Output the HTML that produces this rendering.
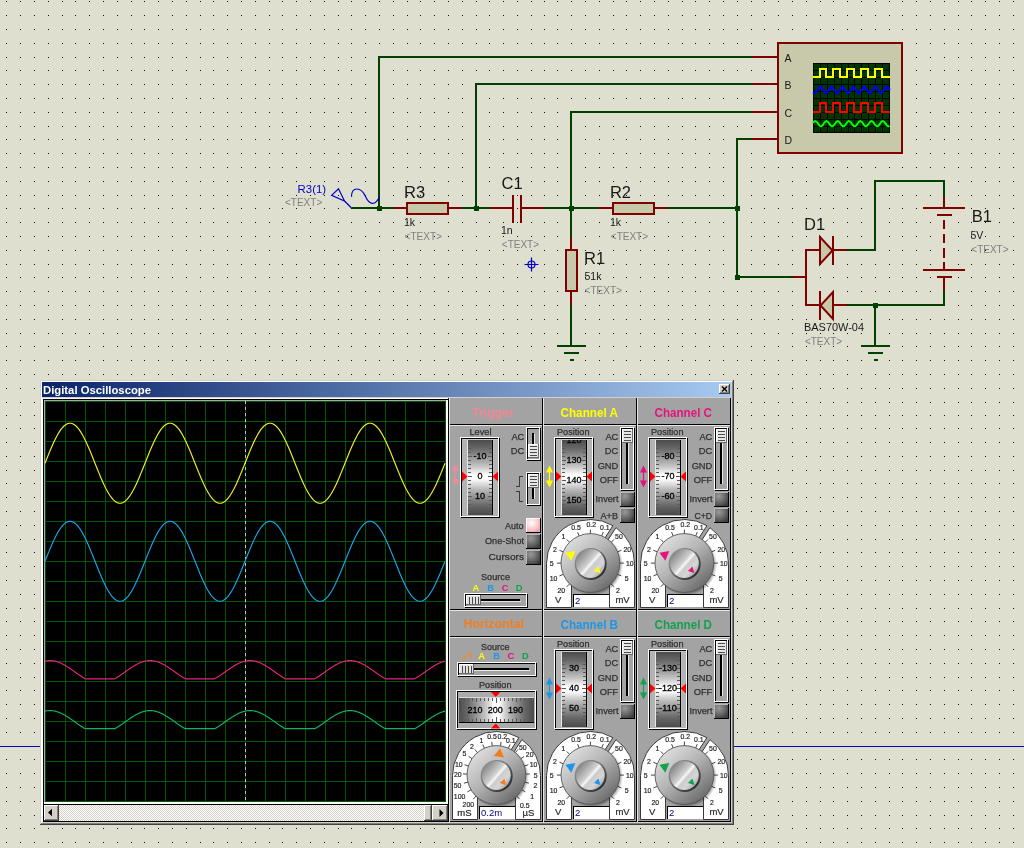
<!DOCTYPE html>
<html><head><meta charset="utf-8"><title>Digital Oscilloscope</title>
<style>
html,body{margin:0;padding:0;background:#DEDFCE;overflow:hidden}
svg{display:block;will-change:transform;transform:translateZ(0)}
text{font-family:"Liberation Sans",sans-serif}
.b{font-weight:bold}
</style></head><body>
<svg width="1024" height="848" viewBox="0 0 1024 848">

<defs>
<path id="dr" d="M6 0h1M20 0h1M34 0h1M48 0h1M62 0h1M75 0h1M89 0h1M103 0h1M117 0h1M131 0h1M144 0h1M158 0h1M172 0h1M186 0h1M200 0h1M213 0h1M227 0h1M241 0h1M255 0h1M269 0h1M282 0h1M296 0h1M310 0h1M324 0h1M338 0h1M351 0h1M365 0h1M379 0h1M393 0h1M407 0h1M420 0h1M434 0h1M448 0h1M462 0h1M476 0h1M489 0h1M503 0h1M517 0h1M531 0h1M544 0h1M557 0h1M571 0h1M585 0h1M599 0h1M613 0h1M626 0h1M640 0h1M654 0h1M668 0h1M682 0h1M695 0h1M709 0h1M723 0h1M737 0h1M751 0h1M764 0h1M778 0h1M792 0h1M806 0h1M820 0h1M833 0h1M847 0h1M861 0h1M875 0h1M889 0h1M902 0h1M916 0h1M930 0h1M944 0h1M958 0h1M971 0h1M985 0h1M999 0h1M1013 0h1" stroke="#141414" stroke-width="1" fill="none" shape-rendering="crispEdges"/>
<linearGradient id="tg" x1="0" y1="0" x2="1" y2="0"><stop offset="0" stop-color="#0A246A"/><stop offset="1" stop-color="#A6CAF0"/></linearGradient>
<linearGradient id="vd" x1="0" y1="0" x2="0" y2="1"><stop offset="0" stop-color="#4c4c4c"/><stop offset="0.12" stop-color="#6a6a6a"/><stop offset="0.36" stop-color="#c8c8c8"/><stop offset="0.47" stop-color="#ffffff"/><stop offset="0.52" stop-color="#ffffff"/><stop offset="0.66" stop-color="#b8b8b8"/><stop offset="0.88" stop-color="#666666"/><stop offset="1" stop-color="#4a4a4a"/></linearGradient>
<linearGradient id="hd" x1="0" y1="0" x2="1" y2="0"><stop offset="0" stop-color="#4c4c4c"/><stop offset="0.12" stop-color="#6a6a6a"/><stop offset="0.36" stop-color="#c8c8c8"/><stop offset="0.47" stop-color="#ffffff"/><stop offset="0.53" stop-color="#ffffff"/><stop offset="0.66" stop-color="#b8b8b8"/><stop offset="0.88" stop-color="#666666"/><stop offset="1" stop-color="#4a4a4a"/></linearGradient>
<radialGradient id="bd" cx="0.35" cy="0.3" r="0.8"><stop offset="0" stop-color="#9a9a9a"/><stop offset="0.5" stop-color="#6e6e6e"/><stop offset="1" stop-color="#3c3c3c"/></radialGradient>
<radialGradient id="bl" cx="0.4" cy="0.35" r="0.75"><stop offset="0" stop-color="#ffffff"/><stop offset="0.5" stop-color="#fcd4d8"/><stop offset="1" stop-color="#eea2aa"/></radialGradient>
<linearGradient id="kg" x1="0.15" y1="0.1" x2="0.85" y2="0.9"><stop offset="0" stop-color="#dedede"/><stop offset="0.45" stop-color="#b4b4b4"/><stop offset="0.8" stop-color="#868686"/><stop offset="1" stop-color="#6a6a6a"/></linearGradient>
<linearGradient id="cg" x1="0.1" y1="0.15" x2="0.9" y2="0.85"><stop offset="0" stop-color="#848484"/><stop offset="0.28" stop-color="#b4b4b4"/><stop offset="0.44" stop-color="#d0d0d0"/><stop offset="0.52" stop-color="#f8f8f8"/><stop offset="0.6" stop-color="#cccccc"/><stop offset="0.8" stop-color="#d6d6d6"/><stop offset="1" stop-color="#a4a4a4"/></linearGradient>
<linearGradient id="rg" x1="0.15" y1="0.15" x2="0.85" y2="0.85"><stop offset="0" stop-color="#8e8e8e"/><stop offset="0.5" stop-color="#6a6a6a"/><stop offset="1" stop-color="#2e2e2e"/></linearGradient>
<radialGradient id="ks" cx="0.5" cy="0.5" r="0.5"><stop offset="0.86" stop-color="#000" stop-opacity="0.45"/><stop offset="1" stop-color="#000" stop-opacity="0"/></radialGradient>

<pattern id="ck" width="2" height="2" patternUnits="userSpaceOnUse"><rect width="2" height="2" fill="#FFFFFF"/><rect width="1" height="1" fill="#D4D0C8"/><rect x="1" y="1" width="1" height="1" fill="#D4D0C8"/></pattern>
</defs>
<g>
<use href="#dr" y="1.5"/>
<use href="#dr" y="15.5"/>
<use href="#dr" y="29.5"/>
<use href="#dr" y="43.5"/>
<use href="#dr" y="57.5"/>
<use href="#dr" y="70.5"/>
<use href="#dr" y="84.5"/>
<use href="#dr" y="98.5"/>
<use href="#dr" y="112.5"/>
<use href="#dr" y="126.5"/>
<use href="#dr" y="139.5"/>
<use href="#dr" y="153.5"/>
<use href="#dr" y="167.5"/>
<use href="#dr" y="181.5"/>
<use href="#dr" y="195.5"/>
<use href="#dr" y="208.5"/>
<use href="#dr" y="222.5"/>
<use href="#dr" y="236.5"/>
<use href="#dr" y="250.5"/>
<use href="#dr" y="264.5"/>
<use href="#dr" y="277.5"/>
<use href="#dr" y="291.5"/>
<use href="#dr" y="305.5"/>
<use href="#dr" y="319.5"/>
<use href="#dr" y="333.5"/>
<use href="#dr" y="346.5"/>
<use href="#dr" y="360.5"/>
<use href="#dr" y="374.5"/>
<use href="#dr" y="388.5"/>
<use href="#dr" y="402.5"/>
<use href="#dr" y="415.5"/>
<use href="#dr" y="428.5"/>
<use href="#dr" y="442.5"/>
<use href="#dr" y="456.5"/>
<use href="#dr" y="470.5"/>
<use href="#dr" y="483.5"/>
<use href="#dr" y="497.5"/>
<use href="#dr" y="511.5"/>
<use href="#dr" y="525.5"/>
<use href="#dr" y="539.5"/>
<use href="#dr" y="552.5"/>
<use href="#dr" y="566.5"/>
<use href="#dr" y="580.5"/>
<use href="#dr" y="594.5"/>
<use href="#dr" y="608.5"/>
<use href="#dr" y="621.5"/>
<use href="#dr" y="635.5"/>
<use href="#dr" y="649.5"/>
<use href="#dr" y="663.5"/>
<use href="#dr" y="677.5"/>
<use href="#dr" y="690.5"/>
<use href="#dr" y="704.5"/>
<use href="#dr" y="718.5"/>
<use href="#dr" y="732.5"/>
<use href="#dr" y="746.5"/>
<use href="#dr" y="759.5"/>
<use href="#dr" y="773.5"/>
<use href="#dr" y="787.5"/>
<use href="#dr" y="801.5"/>
<use href="#dr" y="815.5"/>
<use href="#dr" y="828.5"/>
<use href="#dr" y="842.5"/>
</g>
<rect x="0" y="746" width="1024" height="1" fill="#0000C0" shape-rendering="crispEdges"/>
<g shape-rendering="crispEdges">
<rect x="378" y="56" width="2" height="152" fill="#004000"/>
<rect x="378" y="56" width="374" height="2" fill="#004000"/>
<rect x="752" y="56" width="26" height="2" fill="#800000"/>
<rect x="475" y="83" width="2" height="125" fill="#004000"/>
<rect x="475" y="83" width="277" height="2" fill="#004000"/>
<rect x="752" y="83" width="26" height="2" fill="#800000"/>
<rect x="570" y="111" width="2" height="127" fill="#004000"/>
<rect x="570" y="111" width="182" height="2" fill="#004000"/>
<rect x="752" y="111" width="26" height="2" fill="#800000"/>
<rect x="736" y="138" width="2" height="140" fill="#004000"/>
<rect x="736" y="138" width="16" height="2" fill="#004000"/>
<rect x="752" y="138" width="26" height="2" fill="#800000"/>
<rect x="352" y="207" width="41" height="2" fill="#004000"/>
<rect x="393" y="207" width="14" height="2" fill="#800000"/>
<rect x="448" y="207" width="14" height="2" fill="#800000"/>
<rect x="462" y="207" width="28" height="2" fill="#004000"/>
<rect x="490" y="207" width="22" height="2" fill="#800000"/>
<rect x="522" y="207" width="22" height="2" fill="#800000"/>
<rect x="544" y="207" width="55" height="2" fill="#004000"/>
<rect x="599" y="207" width="14" height="2" fill="#800000"/>
<rect x="654" y="207" width="14" height="2" fill="#800000"/>
<rect x="668" y="207" width="70" height="2" fill="#004000"/>
<rect x="570" y="238" width="2" height="12" fill="#800000"/>
<rect x="570" y="291" width="2" height="14" fill="#800000"/>
<rect x="570" y="305" width="2" height="40" fill="#004000"/>
<rect x="557" y="345" width="29" height="2" fill="#004000"/>
<rect x="564" y="352" width="15" height="2" fill="#004000"/>
<rect x="570" y="359" width="4" height="2" fill="#004000"/>
<rect x="736" y="276" width="57" height="2" fill="#004000"/>
<rect x="793" y="276" width="13" height="2" fill="#800000"/>
<rect x="805" y="249" width="2" height="57" fill="#800000"/>
<rect x="805" y="249" width="15" height="2" fill="#800000"/>
<rect x="833" y="249" width="14" height="2" fill="#800000"/>
<rect x="847" y="249" width="29" height="2" fill="#004000"/>
<rect x="805" y="304" width="15" height="2" fill="#800000"/>
<rect x="833" y="304" width="14" height="2" fill="#800000"/>
<rect x="847" y="304" width="98" height="2" fill="#004000"/>
<rect x="874" y="180" width="2" height="71" fill="#004000"/>
<rect x="874" y="180" width="71" height="2" fill="#004000"/>
<rect x="943" y="180" width="2" height="17" fill="#004000"/>
<rect x="943" y="197" width="2" height="10" fill="#800000"/>
<rect x="943" y="277" width="2" height="13" fill="#800000"/>
<rect x="943" y="290" width="2" height="16" fill="#004000"/>
<rect x="874" y="305" width="2" height="40" fill="#004000"/>
<rect x="861" y="345" width="29" height="2" fill="#004000"/>
<rect x="868" y="352" width="15" height="2" fill="#004000"/>
<rect x="874" y="359" width="4" height="2" fill="#004000"/>
<rect x="923" y="207" width="42" height="2" fill="#800000"/>
<rect x="937" y="214" width="15" height="2" fill="#800000"/>
<rect x="923" y="269" width="42" height="2" fill="#800000"/>
<rect x="937" y="276" width="15" height="2" fill="#800000"/>
<rect x="943" y="220" width="2" height="9" fill="#800000"/>
<rect x="943" y="234" width="2" height="9" fill="#800000"/>
<rect x="943" y="248" width="2" height="10" fill="#800000"/>
<rect x="943" y="262" width="2" height="7" fill="#800000"/>
<rect x="512" y="195" width="2" height="28" fill="#800000"/>
<rect x="520" y="195" width="2" height="28" fill="#800000"/>
<rect x="832" y="236" width="2" height="29" fill="#800000"/>
<rect x="819" y="291" width="2" height="29" fill="#800000"/>
<rect x="377" y="206" width="5" height="5" fill="#004000"/>
<rect x="474" y="206" width="5" height="5" fill="#004000"/>
<rect x="569" y="206" width="5" height="5" fill="#004000"/>
<rect x="735" y="206" width="5" height="5" fill="#004000"/>
<rect x="735" y="275" width="5" height="5" fill="#004000"/>
<rect x="873" y="303" width="5" height="5" fill="#004000"/>
<rect x="407" y="203" width="41" height="11" fill="#C8C8AA" stroke="#800000" stroke-width="2"/>
<rect x="613" y="203" width="41" height="11" fill="#C8C8AA" stroke="#800000" stroke-width="2"/>
<rect x="566" y="250" width="11" height="41" fill="#C8C8AA" stroke="#800000" stroke-width="2"/>
<rect x="778" y="43" width="124" height="110" fill="#C8C8AA" stroke="#800000" stroke-width="2"/>
</g>
<path d="M820 237 L820 264 L832.5 250.5 Z" fill="#C8C8AA" stroke="#800000" stroke-width="2" stroke-linejoin="miter"/>
<path d="M833 292 L833 319 L820.5 305.5 Z" fill="#C8C8AA" stroke="#800000" stroke-width="2" stroke-linejoin="miter"/>
<g shape-rendering="crispEdges">
<rect x="813" y="63" width="77" height="70" fill="#000"/>
<rect x="814" y="64" width="6" height="6" fill="#003400"/>
<rect x="814" y="71" width="6" height="6" fill="#003400"/>
<rect x="814" y="78" width="6" height="6" fill="#003400"/>
<rect x="814" y="85" width="6" height="6" fill="#003400"/>
<rect x="814" y="92" width="6" height="6" fill="#003400"/>
<rect x="814" y="99" width="6" height="6" fill="#003400"/>
<rect x="814" y="106" width="6" height="6" fill="#003400"/>
<rect x="814" y="113" width="6" height="6" fill="#003400"/>
<rect x="814" y="120" width="6" height="6" fill="#003400"/>
<rect x="814" y="127" width="6" height="5" fill="#003400"/>
<rect x="821" y="64" width="6" height="6" fill="#003400"/>
<rect x="821" y="71" width="6" height="6" fill="#003400"/>
<rect x="821" y="78" width="6" height="6" fill="#003400"/>
<rect x="821" y="85" width="6" height="6" fill="#003400"/>
<rect x="821" y="92" width="6" height="6" fill="#003400"/>
<rect x="821" y="99" width="6" height="6" fill="#003400"/>
<rect x="821" y="106" width="6" height="6" fill="#003400"/>
<rect x="821" y="113" width="6" height="6" fill="#003400"/>
<rect x="821" y="120" width="6" height="6" fill="#003400"/>
<rect x="821" y="127" width="6" height="5" fill="#003400"/>
<rect x="828" y="64" width="6" height="6" fill="#003400"/>
<rect x="828" y="71" width="6" height="6" fill="#003400"/>
<rect x="828" y="78" width="6" height="6" fill="#003400"/>
<rect x="828" y="85" width="6" height="6" fill="#003400"/>
<rect x="828" y="92" width="6" height="6" fill="#003400"/>
<rect x="828" y="99" width="6" height="6" fill="#003400"/>
<rect x="828" y="106" width="6" height="6" fill="#003400"/>
<rect x="828" y="113" width="6" height="6" fill="#003400"/>
<rect x="828" y="120" width="6" height="6" fill="#003400"/>
<rect x="828" y="127" width="6" height="5" fill="#003400"/>
<rect x="835" y="64" width="6" height="6" fill="#003400"/>
<rect x="835" y="71" width="6" height="6" fill="#003400"/>
<rect x="835" y="78" width="6" height="6" fill="#003400"/>
<rect x="835" y="85" width="6" height="6" fill="#003400"/>
<rect x="835" y="92" width="6" height="6" fill="#003400"/>
<rect x="835" y="99" width="6" height="6" fill="#003400"/>
<rect x="835" y="106" width="6" height="6" fill="#003400"/>
<rect x="835" y="113" width="6" height="6" fill="#003400"/>
<rect x="835" y="120" width="6" height="6" fill="#003400"/>
<rect x="835" y="127" width="6" height="5" fill="#003400"/>
<rect x="842" y="64" width="6" height="6" fill="#003400"/>
<rect x="842" y="71" width="6" height="6" fill="#003400"/>
<rect x="842" y="78" width="6" height="6" fill="#003400"/>
<rect x="842" y="85" width="6" height="6" fill="#003400"/>
<rect x="842" y="92" width="6" height="6" fill="#003400"/>
<rect x="842" y="99" width="6" height="6" fill="#003400"/>
<rect x="842" y="106" width="6" height="6" fill="#003400"/>
<rect x="842" y="113" width="6" height="6" fill="#003400"/>
<rect x="842" y="120" width="6" height="6" fill="#003400"/>
<rect x="842" y="127" width="6" height="5" fill="#003400"/>
<rect x="849" y="64" width="5" height="6" fill="#003400"/>
<rect x="849" y="71" width="5" height="6" fill="#003400"/>
<rect x="849" y="78" width="5" height="6" fill="#003400"/>
<rect x="849" y="85" width="5" height="6" fill="#003400"/>
<rect x="849" y="92" width="5" height="6" fill="#003400"/>
<rect x="849" y="99" width="5" height="6" fill="#003400"/>
<rect x="849" y="106" width="5" height="6" fill="#003400"/>
<rect x="849" y="113" width="5" height="6" fill="#003400"/>
<rect x="849" y="120" width="5" height="6" fill="#003400"/>
<rect x="849" y="127" width="5" height="5" fill="#003400"/>
<rect x="855" y="64" width="6" height="6" fill="#003400"/>
<rect x="855" y="71" width="6" height="6" fill="#003400"/>
<rect x="855" y="78" width="6" height="6" fill="#003400"/>
<rect x="855" y="85" width="6" height="6" fill="#003400"/>
<rect x="855" y="92" width="6" height="6" fill="#003400"/>
<rect x="855" y="99" width="6" height="6" fill="#003400"/>
<rect x="855" y="106" width="6" height="6" fill="#003400"/>
<rect x="855" y="113" width="6" height="6" fill="#003400"/>
<rect x="855" y="120" width="6" height="6" fill="#003400"/>
<rect x="855" y="127" width="6" height="5" fill="#003400"/>
<rect x="862" y="64" width="6" height="6" fill="#003400"/>
<rect x="862" y="71" width="6" height="6" fill="#003400"/>
<rect x="862" y="78" width="6" height="6" fill="#003400"/>
<rect x="862" y="85" width="6" height="6" fill="#003400"/>
<rect x="862" y="92" width="6" height="6" fill="#003400"/>
<rect x="862" y="99" width="6" height="6" fill="#003400"/>
<rect x="862" y="106" width="6" height="6" fill="#003400"/>
<rect x="862" y="113" width="6" height="6" fill="#003400"/>
<rect x="862" y="120" width="6" height="6" fill="#003400"/>
<rect x="862" y="127" width="6" height="5" fill="#003400"/>
<rect x="869" y="64" width="6" height="6" fill="#003400"/>
<rect x="869" y="71" width="6" height="6" fill="#003400"/>
<rect x="869" y="78" width="6" height="6" fill="#003400"/>
<rect x="869" y="85" width="6" height="6" fill="#003400"/>
<rect x="869" y="92" width="6" height="6" fill="#003400"/>
<rect x="869" y="99" width="6" height="6" fill="#003400"/>
<rect x="869" y="106" width="6" height="6" fill="#003400"/>
<rect x="869" y="113" width="6" height="6" fill="#003400"/>
<rect x="869" y="120" width="6" height="6" fill="#003400"/>
<rect x="869" y="127" width="6" height="5" fill="#003400"/>
<rect x="876" y="64" width="6" height="6" fill="#003400"/>
<rect x="876" y="71" width="6" height="6" fill="#003400"/>
<rect x="876" y="78" width="6" height="6" fill="#003400"/>
<rect x="876" y="85" width="6" height="6" fill="#003400"/>
<rect x="876" y="92" width="6" height="6" fill="#003400"/>
<rect x="876" y="99" width="6" height="6" fill="#003400"/>
<rect x="876" y="106" width="6" height="6" fill="#003400"/>
<rect x="876" y="113" width="6" height="6" fill="#003400"/>
<rect x="876" y="120" width="6" height="6" fill="#003400"/>
<rect x="876" y="127" width="6" height="5" fill="#003400"/>
<rect x="883" y="64" width="6" height="6" fill="#003400"/>
<rect x="883" y="71" width="6" height="6" fill="#003400"/>
<rect x="883" y="78" width="6" height="6" fill="#003400"/>
<rect x="883" y="85" width="6" height="6" fill="#003400"/>
<rect x="883" y="92" width="6" height="6" fill="#003400"/>
<rect x="883" y="99" width="6" height="6" fill="#003400"/>
<rect x="883" y="106" width="6" height="6" fill="#003400"/>
<rect x="883" y="113" width="6" height="6" fill="#003400"/>
<rect x="883" y="120" width="6" height="6" fill="#003400"/>
<rect x="883" y="127" width="6" height="5" fill="#003400"/>
</g>
<path d="M813 77 H820 V69 H826 V77 H833 V69 H840 V77 H847 V69 H854 V77 H861 V69 H868 V77 H875 V69 H882 V77 H890" fill="none" stroke="#FFFF00" stroke-width="2" shape-rendering="crispEdges"/>
<path d="M813 112 H820 V103 H826 V112 H833 V103 H840 V112 H847 V103 H854 V112 H861 V103 H868 V112 H875 V103 H882 V112 H890" fill="none" stroke="#FF0000" stroke-width="2" shape-rendering="crispEdges"/>
<path d="M813 92.5 L814.4 93.5 L820.5 86.5 L825.9 93.5 L831.4 86.5 L836.8 93.5 L842.5 86.5 L847.9 93.5 L853.5 86.5 L858.9 93.5 L864.4 86.5 L869.8 93.5 L875.5 86.5 L880.9 93.5 L886.8 86.5 L890 90" fill="none" stroke="#0000FF" stroke-width="2"/>
<path d="M813.0 123.0 L813.8 122.0 L814.5 121.4 L815.2 121.1 L816.0 121.3 L816.8 121.9 L817.5 122.8 L818.2 123.9 L819.0 124.9 L819.8 125.8 L820.5 126.2 L821.2 126.3 L822.0 125.8 L822.8 125.1 L823.5 124.0 L824.2 123.0 L825.0 122.0 L825.8 121.4 L826.5 121.1 L827.2 121.3 L828.0 121.9 L828.8 122.8 L829.5 123.9 L830.2 124.9 L831.0 125.8 L831.8 126.2 L832.5 126.3 L833.2 125.8 L834.0 125.1 L834.8 124.0 L835.5 123.0 L836.2 122.0 L837.0 121.4 L837.8 121.1 L838.5 121.3 L839.2 121.9 L840.0 122.8 L840.8 123.9 L841.5 124.9 L842.2 125.8 L843.0 126.2 L843.8 126.3 L844.5 125.8 L845.2 125.1 L846.0 124.0 L846.8 123.0 L847.5 122.0 L848.2 121.4 L849.0 121.1 L849.8 121.3 L850.5 121.9 L851.2 122.8 L852.0 123.9 L852.8 124.9 L853.5 125.8 L854.2 126.2 L855.0 126.3 L855.8 125.8 L856.5 125.1 L857.2 124.0 L858.0 123.0 L858.8 122.0 L859.5 121.4 L860.2 121.1 L861.0 121.3 L861.8 121.9 L862.5 122.8 L863.2 123.9 L864.0 124.9 L864.8 125.8 L865.5 126.2 L866.2 126.3 L867.0 125.8 L867.8 125.1 L868.5 124.0 L869.2 123.0 L870.0 122.0 L870.8 121.4 L871.5 121.1 L872.2 121.3 L873.0 121.9 L873.8 122.8 L874.5 123.9 L875.2 124.9 L876.0 125.8 L876.8 126.2 L877.5 126.3 L878.2 125.8 L879.0 125.1 L879.8 124.0 L880.5 123.0 L881.2 122.0 L882.0 121.4 L882.8 121.1 L883.5 121.3 L884.2 121.9 L885.0 122.8 L885.8 123.9 L886.5 124.9 L887.2 125.8 L888.0 126.2 L888.8 126.3 L889.5 125.8 " fill="none" stroke="#00FF00" stroke-width="2"/>
<g fill="none" stroke="#0000C8" stroke-width="1.2">
<path d="M331.6 195.4 L338.5 188.7 L344.5 201 Z"/>
<path d="M344.5 201 L351.5 208"/>
<path d="M351.5 196.8 C351.5 186.5 361 186.5 365.4 196.3 C369.5 205.5 375.5 206 379.5 196.5"/>
<circle cx="531.5" cy="264.5" r="3.5"/><path d="M524.5 264.5 H538.5 M531.5 257.5 V271.5"/>
</g>
<text x="297.6" y="192.8" font-size="10.5" fill="#0000C8" textLength="28.5" lengthAdjust="spacingAndGlyphs">R3(1)</text>
<text x="285" y="205.6" font-size="10" fill="#808080" >&lt;TEXT&gt;</text>
<text x="404" y="197.5" font-size="16.5" fill="#181818" >R3</text>
<text x="404" y="226" font-size="10.5" fill="#181818" >1k</text>
<text x="404.6" y="240" font-size="10" fill="#808080" >&lt;TEXT&gt;</text>
<text x="501.6" y="188.8" font-size="16.5" fill="#181818" >C1</text>
<text x="501" y="233.8" font-size="10.5" fill="#181818" >1n</text>
<text x="501.8" y="247.5" font-size="10" fill="#808080" >&lt;TEXT&gt;</text>
<text x="584" y="264" font-size="16.5" fill="#181818" >R1</text>
<text x="584.5" y="279.8" font-size="10.5" fill="#181818" >51k</text>
<text x="584.6" y="293.8" font-size="10" fill="#808080" >&lt;TEXT&gt;</text>
<text x="609.9" y="197.5" font-size="16.5" fill="#181818" >R2</text>
<text x="610" y="226" font-size="10.5" fill="#181818" >1k</text>
<text x="610.8" y="240" font-size="10" fill="#808080" >&lt;TEXT&gt;</text>
<text x="804" y="230.3" font-size="16.5" fill="#181818" >D1</text>
<text x="804" y="330.6" font-size="10.5" fill="#181818" textLength="60" lengthAdjust="spacingAndGlyphs">BAS70W-04</text>
<text x="804.9" y="344.7" font-size="10" fill="#808080" >&lt;TEXT&gt;</text>
<text x="971.8" y="221.5" font-size="16.5" fill="#181818" >B1</text>
<text x="970.5" y="238.8" font-size="10.5" fill="#181818" >5V</text>
<text x="971.3" y="252.8" font-size="10" fill="#808080" >&lt;TEXT&gt;</text>
<text x="784.5" y="61.5" font-size="10.5" fill="#181818" >A</text>
<text x="784.5" y="89" font-size="10.5" fill="#181818" >B</text>
<text x="784.5" y="116.6" font-size="10.5" fill="#181818" >C</text>
<text x="784.5" y="144" font-size="10.5" fill="#181818" >D</text>
<g shape-rendering="crispEdges">
<rect x="40" y="380" width="694" height="445" fill="#D4D0C8" />
<rect x="40" y="380" width="694" height="1" fill="#D4D0C8" />
<rect x="40" y="380" width="1" height="445" fill="#D4D0C8" />
<rect x="41" y="381" width="692" height="1" fill="#FFFFFF" />
<rect x="41" y="381" width="1" height="443" fill="#FFFFFF" />
<rect x="733" y="380" width="1" height="445" fill="#404040" />
<rect x="40" y="824" width="694" height="1" fill="#404040" />
<rect x="732" y="381" width="1" height="443" fill="#808080" />
<rect x="41" y="823" width="692" height="1" fill="#808080" />
<rect x="42" y="382" width="689" height="15" fill="url(#tg)" />
<rect x="719" y="384" width="11" height="10" fill="#D4D0C8" />
<rect x="719" y="384" width="11" height="1" fill="#FFFFFF" />
<rect x="719" y="384" width="1" height="10" fill="#FFFFFF" />
<rect x="729" y="384" width="1" height="10" fill="#404040" />
<rect x="719" y="393" width="11" height="1" fill="#404040" />
<rect x="728" y="385" width="1" height="8" fill="#808080" />
<rect x="720" y="392" width="9" height="1" fill="#808080" />
</g>
<path d="M722 386.5 L727 391.5 M727 386.5 L722 391.5" stroke="#000" stroke-width="1.4" fill="none"/>
<text x="43" y="394" font-size="11" fill="#FFFFFF" textLength="108" lengthAdjust="spacingAndGlyphs" class="b">Digital Oscilloscope</text>
<g shape-rendering="crispEdges">
<rect x="42" y="398" width="1" height="424" fill="#FFFFFF" />
<rect x="42" y="398" width="406" height="1" fill="#FFFFFF" />
<rect x="43" y="399" width="405" height="1" fill="#000000" />
<rect x="43" y="399" width="1" height="423" fill="#000000" />
<rect x="44" y="400" width="403" height="1" fill="#A8A8A8" />
<rect x="44" y="400" width="1" height="403" fill="#A8A8A8" />
<rect x="446" y="400" width="2" height="404" fill="#FFFFFF" />
<rect x="44" y="802" width="404" height="2" fill="#FFFFFF" />
<rect x="45" y="401" width="401" height="401" fill="#000000" />
<rect x="45" y="401" width="1" height="401" fill="#005600" />
<rect x="45" y="401" width="401" height="1" fill="#005600" />
<rect x="65" y="401" width="1" height="401" fill="#005600" />
<rect x="45" y="421" width="401" height="1" fill="#005600" />
<rect x="85" y="401" width="1" height="401" fill="#005600" />
<rect x="45" y="441" width="401" height="1" fill="#005600" />
<rect x="105" y="401" width="1" height="401" fill="#005600" />
<rect x="45" y="461" width="401" height="1" fill="#005600" />
<rect x="125" y="401" width="1" height="401" fill="#005600" />
<rect x="45" y="481" width="401" height="1" fill="#005600" />
<rect x="145" y="401" width="1" height="401" fill="#005600" />
<rect x="45" y="501" width="401" height="1" fill="#005600" />
<rect x="165" y="401" width="1" height="401" fill="#005600" />
<rect x="45" y="521" width="401" height="1" fill="#005600" />
<rect x="185" y="401" width="1" height="401" fill="#005600" />
<rect x="45" y="541" width="401" height="1" fill="#005600" />
<rect x="205" y="401" width="1" height="401" fill="#005600" />
<rect x="45" y="561" width="401" height="1" fill="#005600" />
<rect x="225" y="401" width="1" height="401" fill="#005600" />
<rect x="45" y="581" width="401" height="1" fill="#005600" />
<rect x="245" y="401" width="1" height="401" fill="#005600" />
<rect x="45" y="601" width="401" height="1" fill="#005600" />
<rect x="265" y="401" width="1" height="401" fill="#005600" />
<rect x="45" y="621" width="401" height="1" fill="#005600" />
<rect x="285" y="401" width="1" height="401" fill="#005600" />
<rect x="45" y="641" width="401" height="1" fill="#005600" />
<rect x="305" y="401" width="1" height="401" fill="#005600" />
<rect x="45" y="661" width="401" height="1" fill="#005600" />
<rect x="325" y="401" width="1" height="401" fill="#005600" />
<rect x="45" y="681" width="401" height="1" fill="#005600" />
<rect x="345" y="401" width="1" height="401" fill="#005600" />
<rect x="45" y="701" width="401" height="1" fill="#005600" />
<rect x="365" y="401" width="1" height="401" fill="#005600" />
<rect x="45" y="721" width="401" height="1" fill="#005600" />
<rect x="385" y="401" width="1" height="401" fill="#005600" />
<rect x="45" y="741" width="401" height="1" fill="#005600" />
<rect x="405" y="401" width="1" height="401" fill="#005600" />
<rect x="45" y="761" width="401" height="1" fill="#005600" />
<rect x="425" y="401" width="1" height="401" fill="#005600" />
<rect x="45" y="781" width="401" height="1" fill="#005600" />
<rect x="445" y="401" width="1" height="401" fill="#005600" />
<rect x="45" y="801" width="401" height="1" fill="#005600" />
<rect x="245" y="401" width="1" height="3" fill="#C4C4C4" />
<rect x="245" y="407" width="1" height="3" fill="#C4C4C4" />
<rect x="245" y="413" width="1" height="3" fill="#C4C4C4" />
<rect x="245" y="419" width="1" height="3" fill="#C4C4C4" />
<rect x="245" y="425" width="1" height="3" fill="#C4C4C4" />
<rect x="245" y="431" width="1" height="3" fill="#C4C4C4" />
<rect x="245" y="437" width="1" height="3" fill="#C4C4C4" />
<rect x="245" y="443" width="1" height="3" fill="#C4C4C4" />
<rect x="245" y="449" width="1" height="3" fill="#C4C4C4" />
<rect x="245" y="455" width="1" height="3" fill="#C4C4C4" />
<rect x="245" y="461" width="1" height="3" fill="#C4C4C4" />
<rect x="245" y="467" width="1" height="3" fill="#C4C4C4" />
<rect x="245" y="473" width="1" height="3" fill="#C4C4C4" />
<rect x="245" y="479" width="1" height="3" fill="#C4C4C4" />
<rect x="245" y="485" width="1" height="3" fill="#C4C4C4" />
<rect x="245" y="491" width="1" height="3" fill="#C4C4C4" />
<rect x="245" y="497" width="1" height="3" fill="#C4C4C4" />
<rect x="245" y="503" width="1" height="3" fill="#C4C4C4" />
<rect x="245" y="509" width="1" height="3" fill="#C4C4C4" />
<rect x="245" y="515" width="1" height="3" fill="#C4C4C4" />
<rect x="245" y="521" width="1" height="3" fill="#C4C4C4" />
<rect x="245" y="527" width="1" height="3" fill="#C4C4C4" />
<rect x="245" y="533" width="1" height="3" fill="#C4C4C4" />
<rect x="245" y="539" width="1" height="3" fill="#C4C4C4" />
<rect x="245" y="545" width="1" height="3" fill="#C4C4C4" />
<rect x="245" y="551" width="1" height="3" fill="#C4C4C4" />
<rect x="245" y="557" width="1" height="3" fill="#C4C4C4" />
<rect x="245" y="563" width="1" height="3" fill="#C4C4C4" />
<rect x="245" y="569" width="1" height="3" fill="#C4C4C4" />
<rect x="245" y="575" width="1" height="3" fill="#C4C4C4" />
<rect x="245" y="581" width="1" height="3" fill="#C4C4C4" />
<rect x="245" y="587" width="1" height="3" fill="#C4C4C4" />
<rect x="245" y="593" width="1" height="3" fill="#C4C4C4" />
<rect x="245" y="599" width="1" height="3" fill="#C4C4C4" />
<rect x="245" y="605" width="1" height="3" fill="#C4C4C4" />
<rect x="245" y="611" width="1" height="3" fill="#C4C4C4" />
<rect x="245" y="617" width="1" height="3" fill="#C4C4C4" />
<rect x="245" y="623" width="1" height="3" fill="#C4C4C4" />
<rect x="245" y="629" width="1" height="3" fill="#C4C4C4" />
<rect x="245" y="635" width="1" height="3" fill="#C4C4C4" />
<rect x="245" y="641" width="1" height="3" fill="#C4C4C4" />
<rect x="245" y="647" width="1" height="3" fill="#C4C4C4" />
<rect x="245" y="653" width="1" height="3" fill="#C4C4C4" />
<rect x="245" y="659" width="1" height="3" fill="#C4C4C4" />
<rect x="245" y="665" width="1" height="3" fill="#C4C4C4" />
<rect x="245" y="671" width="1" height="3" fill="#C4C4C4" />
<rect x="245" y="677" width="1" height="3" fill="#C4C4C4" />
<rect x="245" y="683" width="1" height="3" fill="#C4C4C4" />
<rect x="245" y="689" width="1" height="3" fill="#C4C4C4" />
<rect x="245" y="695" width="1" height="3" fill="#C4C4C4" />
<rect x="245" y="701" width="1" height="3" fill="#C4C4C4" />
<rect x="245" y="707" width="1" height="3" fill="#C4C4C4" />
<rect x="245" y="713" width="1" height="3" fill="#C4C4C4" />
<rect x="245" y="719" width="1" height="3" fill="#C4C4C4" />
<rect x="245" y="725" width="1" height="3" fill="#C4C4C4" />
<rect x="245" y="731" width="1" height="3" fill="#C4C4C4" />
<rect x="245" y="737" width="1" height="3" fill="#C4C4C4" />
<rect x="245" y="743" width="1" height="3" fill="#C4C4C4" />
<rect x="245" y="749" width="1" height="3" fill="#C4C4C4" />
<rect x="245" y="755" width="1" height="3" fill="#C4C4C4" />
<rect x="245" y="761" width="1" height="3" fill="#C4C4C4" />
<rect x="245" y="767" width="1" height="3" fill="#C4C4C4" />
<rect x="245" y="773" width="1" height="3" fill="#C4C4C4" />
<rect x="245" y="779" width="1" height="3" fill="#C4C4C4" />
<rect x="245" y="785" width="1" height="3" fill="#C4C4C4" />
<rect x="245" y="791" width="1" height="3" fill="#C4C4C4" />
<rect x="245" y="797" width="1" height="3" fill="#C4C4C4" />
<rect x="43" y="804" width="405" height="1" fill="#000000" />
<rect x="44" y="805" width="404" height="16" fill="url(#ck)" />
<rect x="43" y="821" width="405" height="1" fill="#000000" />
<rect x="44" y="805" width="15" height="16" fill="#D4D0C8" />
<rect x="44" y="805" width="15" height="1" fill="#FFFFFF" />
<rect x="44" y="805" width="1" height="16" fill="#FFFFFF" />
<rect x="58" y="805" width="1" height="16" fill="#404040" />
<rect x="44" y="820" width="15" height="1" fill="#404040" />
<rect x="57" y="806" width="1" height="14" fill="#808080" />
<rect x="45" y="819" width="13" height="1" fill="#808080" />
<rect x="432" y="805" width="16" height="16" fill="#D4D0C8" />
<rect x="432" y="805" width="16" height="1" fill="#FFFFFF" />
<rect x="432" y="805" width="1" height="16" fill="#FFFFFF" />
<rect x="447" y="805" width="1" height="16" fill="#404040" />
<rect x="432" y="820" width="16" height="1" fill="#404040" />
<rect x="446" y="806" width="1" height="14" fill="#808080" />
<rect x="433" y="819" width="14" height="1" fill="#808080" />
<rect x="424" y="805" width="8" height="16" fill="#D4D0C8" />
<rect x="424" y="805" width="8" height="1" fill="#FFFFFF" />
<rect x="424" y="805" width="1" height="16" fill="#FFFFFF" />
<rect x="431" y="805" width="1" height="16" fill="#404040" />
<rect x="424" y="820" width="8" height="1" fill="#404040" />
<rect x="430" y="806" width="1" height="14" fill="#808080" />
<rect x="425" y="819" width="6" height="1" fill="#808080" />
</g>
<path d="M52 808.7 L52 816.3 L48 812.5 Z M439.5 809 L439.5 817 L443.5 813 Z" fill="#000"/>
<path d="M45.0 463.20 L46.0 460.69 L47.0 458.19 L48.0 455.70 L49.0 453.25 L50.0 450.84 L51.0 448.48 L52.0 446.17 L53.0 443.93 L54.0 441.77 L55.0 439.69 L56.0 437.70 L57.0 435.82 L58.0 434.04 L59.0 432.38 L60.0 430.84 L61.0 429.43 L62.0 428.15 L63.0 427.01 L64.0 426.01 L65.0 425.16 L66.0 424.46 L67.0 423.91 L68.0 423.52 L69.0 423.28 L70.0 423.20 L71.0 423.28 L72.0 423.52 L73.0 423.91 L74.0 424.46 L75.0 425.16 L76.0 426.01 L77.0 427.01 L78.0 428.15 L79.0 429.43 L80.0 430.84 L81.0 432.38 L82.0 434.04 L83.0 435.82 L84.0 437.70 L85.0 439.69 L86.0 441.77 L87.0 443.93 L88.0 446.17 L89.0 448.48 L90.0 450.84 L91.0 453.25 L92.0 455.70 L93.0 458.19 L94.0 460.69 L95.0 463.20 L96.0 465.71 L97.0 468.21 L98.0 470.70 L99.0 473.15 L100.0 475.56 L101.0 477.92 L102.0 480.23 L103.0 482.47 L104.0 484.63 L105.0 486.71 L106.0 488.70 L107.0 490.58 L108.0 492.36 L109.0 494.02 L110.0 495.56 L111.0 496.97 L112.0 498.25 L113.0 499.39 L114.0 500.39 L115.0 501.24 L116.0 501.94 L117.0 502.49 L118.0 502.88 L119.0 503.12 L120.0 503.20 L121.0 503.12 L122.0 502.88 L123.0 502.49 L124.0 501.94 L125.0 501.24 L126.0 500.39 L127.0 499.39 L128.0 498.25 L129.0 496.97 L130.0 495.56 L131.0 494.02 L132.0 492.36 L133.0 490.58 L134.0 488.70 L135.0 486.71 L136.0 484.63 L137.0 482.47 L138.0 480.23 L139.0 477.92 L140.0 475.56 L141.0 473.15 L142.0 470.70 L143.0 468.21 L144.0 465.71 L145.0 463.20 L146.0 460.69 L147.0 458.19 L148.0 455.70 L149.0 453.25 L150.0 450.84 L151.0 448.48 L152.0 446.17 L153.0 443.93 L154.0 441.77 L155.0 439.69 L156.0 437.70 L157.0 435.82 L158.0 434.04 L159.0 432.38 L160.0 430.84 L161.0 429.43 L162.0 428.15 L163.0 427.01 L164.0 426.01 L165.0 425.16 L166.0 424.46 L167.0 423.91 L168.0 423.52 L169.0 423.28 L170.0 423.20 L171.0 423.28 L172.0 423.52 L173.0 423.91 L174.0 424.46 L175.0 425.16 L176.0 426.01 L177.0 427.01 L178.0 428.15 L179.0 429.43 L180.0 430.84 L181.0 432.38 L182.0 434.04 L183.0 435.82 L184.0 437.70 L185.0 439.69 L186.0 441.77 L187.0 443.93 L188.0 446.17 L189.0 448.48 L190.0 450.84 L191.0 453.25 L192.0 455.70 L193.0 458.19 L194.0 460.69 L195.0 463.20 L196.0 465.71 L197.0 468.21 L198.0 470.70 L199.0 473.15 L200.0 475.56 L201.0 477.92 L202.0 480.23 L203.0 482.47 L204.0 484.63 L205.0 486.71 L206.0 488.70 L207.0 490.58 L208.0 492.36 L209.0 494.02 L210.0 495.56 L211.0 496.97 L212.0 498.25 L213.0 499.39 L214.0 500.39 L215.0 501.24 L216.0 501.94 L217.0 502.49 L218.0 502.88 L219.0 503.12 L220.0 503.20 L221.0 503.12 L222.0 502.88 L223.0 502.49 L224.0 501.94 L225.0 501.24 L226.0 500.39 L227.0 499.39 L228.0 498.25 L229.0 496.97 L230.0 495.56 L231.0 494.02 L232.0 492.36 L233.0 490.58 L234.0 488.70 L235.0 486.71 L236.0 484.63 L237.0 482.47 L238.0 480.23 L239.0 477.92 L240.0 475.56 L241.0 473.15 L242.0 470.70 L243.0 468.21 L244.0 465.71 L245.0 463.20 L246.0 460.69 L247.0 458.19 L248.0 455.70 L249.0 453.25 L250.0 450.84 L251.0 448.48 L252.0 446.17 L253.0 443.93 L254.0 441.77 L255.0 439.69 L256.0 437.70 L257.0 435.82 L258.0 434.04 L259.0 432.38 L260.0 430.84 L261.0 429.43 L262.0 428.15 L263.0 427.01 L264.0 426.01 L265.0 425.16 L266.0 424.46 L267.0 423.91 L268.0 423.52 L269.0 423.28 L270.0 423.20 L271.0 423.28 L272.0 423.52 L273.0 423.91 L274.0 424.46 L275.0 425.16 L276.0 426.01 L277.0 427.01 L278.0 428.15 L279.0 429.43 L280.0 430.84 L281.0 432.38 L282.0 434.04 L283.0 435.82 L284.0 437.70 L285.0 439.69 L286.0 441.77 L287.0 443.93 L288.0 446.17 L289.0 448.48 L290.0 450.84 L291.0 453.25 L292.0 455.70 L293.0 458.19 L294.0 460.69 L295.0 463.20 L296.0 465.71 L297.0 468.21 L298.0 470.70 L299.0 473.15 L300.0 475.56 L301.0 477.92 L302.0 480.23 L303.0 482.47 L304.0 484.63 L305.0 486.71 L306.0 488.70 L307.0 490.58 L308.0 492.36 L309.0 494.02 L310.0 495.56 L311.0 496.97 L312.0 498.25 L313.0 499.39 L314.0 500.39 L315.0 501.24 L316.0 501.94 L317.0 502.49 L318.0 502.88 L319.0 503.12 L320.0 503.20 L321.0 503.12 L322.0 502.88 L323.0 502.49 L324.0 501.94 L325.0 501.24 L326.0 500.39 L327.0 499.39 L328.0 498.25 L329.0 496.97 L330.0 495.56 L331.0 494.02 L332.0 492.36 L333.0 490.58 L334.0 488.70 L335.0 486.71 L336.0 484.63 L337.0 482.47 L338.0 480.23 L339.0 477.92 L340.0 475.56 L341.0 473.15 L342.0 470.70 L343.0 468.21 L344.0 465.71 L345.0 463.20 L346.0 460.69 L347.0 458.19 L348.0 455.70 L349.0 453.25 L350.0 450.84 L351.0 448.48 L352.0 446.17 L353.0 443.93 L354.0 441.77 L355.0 439.69 L356.0 437.70 L357.0 435.82 L358.0 434.04 L359.0 432.38 L360.0 430.84 L361.0 429.43 L362.0 428.15 L363.0 427.01 L364.0 426.01 L365.0 425.16 L366.0 424.46 L367.0 423.91 L368.0 423.52 L369.0 423.28 L370.0 423.20 L371.0 423.28 L372.0 423.52 L373.0 423.91 L374.0 424.46 L375.0 425.16 L376.0 426.01 L377.0 427.01 L378.0 428.15 L379.0 429.43 L380.0 430.84 L381.0 432.38 L382.0 434.04 L383.0 435.82 L384.0 437.70 L385.0 439.69 L386.0 441.77 L387.0 443.93 L388.0 446.17 L389.0 448.48 L390.0 450.84 L391.0 453.25 L392.0 455.70 L393.0 458.19 L394.0 460.69 L395.0 463.20 L396.0 465.71 L397.0 468.21 L398.0 470.70 L399.0 473.15 L400.0 475.56 L401.0 477.92 L402.0 480.23 L403.0 482.47 L404.0 484.63 L405.0 486.71 L406.0 488.70 L407.0 490.58 L408.0 492.36 L409.0 494.02 L410.0 495.56 L411.0 496.97 L412.0 498.25 L413.0 499.39 L414.0 500.39 L415.0 501.24 L416.0 501.94 L417.0 502.49 L418.0 502.88 L419.0 503.12 L420.0 503.20 L421.0 503.12 L422.0 502.88 L423.0 502.49 L424.0 501.94 L425.0 501.24 L426.0 500.39 L427.0 499.39 L428.0 498.25 L429.0 496.97 L430.0 495.56 L431.0 494.02 L432.0 492.36 L433.0 490.58 L434.0 488.70 L435.0 486.71 L436.0 484.63 L437.0 482.47 L438.0 480.23 L439.0 477.92 L440.0 475.56 L441.0 473.15 L442.0 470.70 L443.0 468.21 L444.0 465.71 L445.0 463.20" fill="none" stroke="#F2F226" stroke-width="1.15" stroke-linejoin="round"/>
<path d="M45.0 561.30 L46.0 558.79 L47.0 556.29 L48.0 553.80 L49.0 551.35 L50.0 548.94 L51.0 546.58 L52.0 544.27 L53.0 542.03 L54.0 539.87 L55.0 537.79 L56.0 535.80 L57.0 533.92 L58.0 532.14 L59.0 530.48 L60.0 528.94 L61.0 527.53 L62.0 526.25 L63.0 525.11 L64.0 524.11 L65.0 523.26 L66.0 522.56 L67.0 522.01 L68.0 521.62 L69.0 521.38 L70.0 521.30 L71.0 521.38 L72.0 521.62 L73.0 522.01 L74.0 522.56 L75.0 523.26 L76.0 524.11 L77.0 525.11 L78.0 526.25 L79.0 527.53 L80.0 528.94 L81.0 530.48 L82.0 532.14 L83.0 533.92 L84.0 535.80 L85.0 537.79 L86.0 539.87 L87.0 542.03 L88.0 544.27 L89.0 546.58 L90.0 548.94 L91.0 551.35 L92.0 553.80 L93.0 556.29 L94.0 558.79 L95.0 561.30 L96.0 563.81 L97.0 566.31 L98.0 568.80 L99.0 571.25 L100.0 573.66 L101.0 576.02 L102.0 578.33 L103.0 580.57 L104.0 582.73 L105.0 584.81 L106.0 586.80 L107.0 588.68 L108.0 590.46 L109.0 592.12 L110.0 593.66 L111.0 595.07 L112.0 596.35 L113.0 597.49 L114.0 598.49 L115.0 599.34 L116.0 600.04 L117.0 600.59 L118.0 600.98 L119.0 601.22 L120.0 601.30 L121.0 601.22 L122.0 600.98 L123.0 600.59 L124.0 600.04 L125.0 599.34 L126.0 598.49 L127.0 597.49 L128.0 596.35 L129.0 595.07 L130.0 593.66 L131.0 592.12 L132.0 590.46 L133.0 588.68 L134.0 586.80 L135.0 584.81 L136.0 582.73 L137.0 580.57 L138.0 578.33 L139.0 576.02 L140.0 573.66 L141.0 571.25 L142.0 568.80 L143.0 566.31 L144.0 563.81 L145.0 561.30 L146.0 558.79 L147.0 556.29 L148.0 553.80 L149.0 551.35 L150.0 548.94 L151.0 546.58 L152.0 544.27 L153.0 542.03 L154.0 539.87 L155.0 537.79 L156.0 535.80 L157.0 533.92 L158.0 532.14 L159.0 530.48 L160.0 528.94 L161.0 527.53 L162.0 526.25 L163.0 525.11 L164.0 524.11 L165.0 523.26 L166.0 522.56 L167.0 522.01 L168.0 521.62 L169.0 521.38 L170.0 521.30 L171.0 521.38 L172.0 521.62 L173.0 522.01 L174.0 522.56 L175.0 523.26 L176.0 524.11 L177.0 525.11 L178.0 526.25 L179.0 527.53 L180.0 528.94 L181.0 530.48 L182.0 532.14 L183.0 533.92 L184.0 535.80 L185.0 537.79 L186.0 539.87 L187.0 542.03 L188.0 544.27 L189.0 546.58 L190.0 548.94 L191.0 551.35 L192.0 553.80 L193.0 556.29 L194.0 558.79 L195.0 561.30 L196.0 563.81 L197.0 566.31 L198.0 568.80 L199.0 571.25 L200.0 573.66 L201.0 576.02 L202.0 578.33 L203.0 580.57 L204.0 582.73 L205.0 584.81 L206.0 586.80 L207.0 588.68 L208.0 590.46 L209.0 592.12 L210.0 593.66 L211.0 595.07 L212.0 596.35 L213.0 597.49 L214.0 598.49 L215.0 599.34 L216.0 600.04 L217.0 600.59 L218.0 600.98 L219.0 601.22 L220.0 601.30 L221.0 601.22 L222.0 600.98 L223.0 600.59 L224.0 600.04 L225.0 599.34 L226.0 598.49 L227.0 597.49 L228.0 596.35 L229.0 595.07 L230.0 593.66 L231.0 592.12 L232.0 590.46 L233.0 588.68 L234.0 586.80 L235.0 584.81 L236.0 582.73 L237.0 580.57 L238.0 578.33 L239.0 576.02 L240.0 573.66 L241.0 571.25 L242.0 568.80 L243.0 566.31 L244.0 563.81 L245.0 561.30 L246.0 558.79 L247.0 556.29 L248.0 553.80 L249.0 551.35 L250.0 548.94 L251.0 546.58 L252.0 544.27 L253.0 542.03 L254.0 539.87 L255.0 537.79 L256.0 535.80 L257.0 533.92 L258.0 532.14 L259.0 530.48 L260.0 528.94 L261.0 527.53 L262.0 526.25 L263.0 525.11 L264.0 524.11 L265.0 523.26 L266.0 522.56 L267.0 522.01 L268.0 521.62 L269.0 521.38 L270.0 521.30 L271.0 521.38 L272.0 521.62 L273.0 522.01 L274.0 522.56 L275.0 523.26 L276.0 524.11 L277.0 525.11 L278.0 526.25 L279.0 527.53 L280.0 528.94 L281.0 530.48 L282.0 532.14 L283.0 533.92 L284.0 535.80 L285.0 537.79 L286.0 539.87 L287.0 542.03 L288.0 544.27 L289.0 546.58 L290.0 548.94 L291.0 551.35 L292.0 553.80 L293.0 556.29 L294.0 558.79 L295.0 561.30 L296.0 563.81 L297.0 566.31 L298.0 568.80 L299.0 571.25 L300.0 573.66 L301.0 576.02 L302.0 578.33 L303.0 580.57 L304.0 582.73 L305.0 584.81 L306.0 586.80 L307.0 588.68 L308.0 590.46 L309.0 592.12 L310.0 593.66 L311.0 595.07 L312.0 596.35 L313.0 597.49 L314.0 598.49 L315.0 599.34 L316.0 600.04 L317.0 600.59 L318.0 600.98 L319.0 601.22 L320.0 601.30 L321.0 601.22 L322.0 600.98 L323.0 600.59 L324.0 600.04 L325.0 599.34 L326.0 598.49 L327.0 597.49 L328.0 596.35 L329.0 595.07 L330.0 593.66 L331.0 592.12 L332.0 590.46 L333.0 588.68 L334.0 586.80 L335.0 584.81 L336.0 582.73 L337.0 580.57 L338.0 578.33 L339.0 576.02 L340.0 573.66 L341.0 571.25 L342.0 568.80 L343.0 566.31 L344.0 563.81 L345.0 561.30 L346.0 558.79 L347.0 556.29 L348.0 553.80 L349.0 551.35 L350.0 548.94 L351.0 546.58 L352.0 544.27 L353.0 542.03 L354.0 539.87 L355.0 537.79 L356.0 535.80 L357.0 533.92 L358.0 532.14 L359.0 530.48 L360.0 528.94 L361.0 527.53 L362.0 526.25 L363.0 525.11 L364.0 524.11 L365.0 523.26 L366.0 522.56 L367.0 522.01 L368.0 521.62 L369.0 521.38 L370.0 521.30 L371.0 521.38 L372.0 521.62 L373.0 522.01 L374.0 522.56 L375.0 523.26 L376.0 524.11 L377.0 525.11 L378.0 526.25 L379.0 527.53 L380.0 528.94 L381.0 530.48 L382.0 532.14 L383.0 533.92 L384.0 535.80 L385.0 537.79 L386.0 539.87 L387.0 542.03 L388.0 544.27 L389.0 546.58 L390.0 548.94 L391.0 551.35 L392.0 553.80 L393.0 556.29 L394.0 558.79 L395.0 561.30 L396.0 563.81 L397.0 566.31 L398.0 568.80 L399.0 571.25 L400.0 573.66 L401.0 576.02 L402.0 578.33 L403.0 580.57 L404.0 582.73 L405.0 584.81 L406.0 586.80 L407.0 588.68 L408.0 590.46 L409.0 592.12 L410.0 593.66 L411.0 595.07 L412.0 596.35 L413.0 597.49 L414.0 598.49 L415.0 599.34 L416.0 600.04 L417.0 600.59 L418.0 600.98 L419.0 601.22 L420.0 601.30 L421.0 601.22 L422.0 600.98 L423.0 600.59 L424.0 600.04 L425.0 599.34 L426.0 598.49 L427.0 597.49 L428.0 596.35 L429.0 595.07 L430.0 593.66 L431.0 592.12 L432.0 590.46 L433.0 588.68 L434.0 586.80 L435.0 584.81 L436.0 582.73 L437.0 580.57 L438.0 578.33 L439.0 576.02 L440.0 573.66 L441.0 571.25 L442.0 568.80 L443.0 566.31 L444.0 563.81 L445.0 561.30" fill="none" stroke="#14A8E8" stroke-width="1.15" stroke-linejoin="round"/>
<path d="M45.0 661.16 L46.0 660.96 L47.0 660.80 L48.0 660.69 L49.0 660.62 L50.0 660.60 L51.0 660.62 L52.0 660.69 L53.0 660.80 L54.0 660.96 L55.0 661.16 L56.0 661.40 L57.0 661.68 L58.0 662.01 L59.0 662.37 L60.0 662.78 L61.0 663.22 L62.0 663.69 L63.0 664.20 L64.0 664.73 L65.0 665.30 L66.0 665.89 L67.0 666.51 L68.0 667.15 L69.0 667.80 L70.0 668.48 L71.0 669.16 L72.0 669.86 L73.0 670.57 L74.0 671.28 L75.0 672.00 L76.0 672.72 L77.0 673.43 L78.0 674.14 L79.0 674.84 L80.0 675.52 L81.0 676.20 L82.0 676.85 L83.0 677.49 L84.0 678.11 L85.0 678.70 L86.0 678.80 L87.0 678.80 L88.0 678.80 L89.0 678.80 L90.0 678.80 L91.0 678.80 L92.0 678.80 L93.0 678.80 L94.0 678.80 L95.0 678.80 L96.0 678.80 L97.0 678.80 L98.0 678.80 L99.0 678.80 L100.0 678.80 L101.0 678.80 L102.0 678.80 L103.0 678.80 L104.0 678.80 L105.0 678.80 L106.0 678.80 L107.0 678.80 L108.0 678.80 L109.0 678.80 L110.0 678.80 L111.0 678.80 L112.0 678.80 L113.0 678.80 L114.0 678.80 L115.0 678.70 L116.0 678.11 L117.0 677.49 L118.0 676.85 L119.0 676.20 L120.0 675.52 L121.0 674.84 L122.0 674.14 L123.0 673.43 L124.0 672.72 L125.0 672.00 L126.0 671.28 L127.0 670.57 L128.0 669.86 L129.0 669.16 L130.0 668.48 L131.0 667.80 L132.0 667.15 L133.0 666.51 L134.0 665.89 L135.0 665.30 L136.0 664.73 L137.0 664.20 L138.0 663.69 L139.0 663.22 L140.0 662.78 L141.0 662.37 L142.0 662.01 L143.0 661.68 L144.0 661.40 L145.0 661.16 L146.0 660.96 L147.0 660.80 L148.0 660.69 L149.0 660.62 L150.0 660.60 L151.0 660.62 L152.0 660.69 L153.0 660.80 L154.0 660.96 L155.0 661.16 L156.0 661.40 L157.0 661.68 L158.0 662.01 L159.0 662.37 L160.0 662.78 L161.0 663.22 L162.0 663.69 L163.0 664.20 L164.0 664.73 L165.0 665.30 L166.0 665.89 L167.0 666.51 L168.0 667.15 L169.0 667.80 L170.0 668.48 L171.0 669.16 L172.0 669.86 L173.0 670.57 L174.0 671.28 L175.0 672.00 L176.0 672.72 L177.0 673.43 L178.0 674.14 L179.0 674.84 L180.0 675.52 L181.0 676.20 L182.0 676.85 L183.0 677.49 L184.0 678.11 L185.0 678.70 L186.0 678.80 L187.0 678.80 L188.0 678.80 L189.0 678.80 L190.0 678.80 L191.0 678.80 L192.0 678.80 L193.0 678.80 L194.0 678.80 L195.0 678.80 L196.0 678.80 L197.0 678.80 L198.0 678.80 L199.0 678.80 L200.0 678.80 L201.0 678.80 L202.0 678.80 L203.0 678.80 L204.0 678.80 L205.0 678.80 L206.0 678.80 L207.0 678.80 L208.0 678.80 L209.0 678.80 L210.0 678.80 L211.0 678.80 L212.0 678.80 L213.0 678.80 L214.0 678.80 L215.0 678.70 L216.0 678.11 L217.0 677.49 L218.0 676.85 L219.0 676.20 L220.0 675.52 L221.0 674.84 L222.0 674.14 L223.0 673.43 L224.0 672.72 L225.0 672.00 L226.0 671.28 L227.0 670.57 L228.0 669.86 L229.0 669.16 L230.0 668.48 L231.0 667.80 L232.0 667.15 L233.0 666.51 L234.0 665.89 L235.0 665.30 L236.0 664.73 L237.0 664.20 L238.0 663.69 L239.0 663.22 L240.0 662.78 L241.0 662.37 L242.0 662.01 L243.0 661.68 L244.0 661.40 L245.0 661.16 L246.0 660.96 L247.0 660.80 L248.0 660.69 L249.0 660.62 L250.0 660.60 L251.0 660.62 L252.0 660.69 L253.0 660.80 L254.0 660.96 L255.0 661.16 L256.0 661.40 L257.0 661.68 L258.0 662.01 L259.0 662.37 L260.0 662.78 L261.0 663.22 L262.0 663.69 L263.0 664.20 L264.0 664.73 L265.0 665.30 L266.0 665.89 L267.0 666.51 L268.0 667.15 L269.0 667.80 L270.0 668.48 L271.0 669.16 L272.0 669.86 L273.0 670.57 L274.0 671.28 L275.0 672.00 L276.0 672.72 L277.0 673.43 L278.0 674.14 L279.0 674.84 L280.0 675.52 L281.0 676.20 L282.0 676.85 L283.0 677.49 L284.0 678.11 L285.0 678.70 L286.0 678.80 L287.0 678.80 L288.0 678.80 L289.0 678.80 L290.0 678.80 L291.0 678.80 L292.0 678.80 L293.0 678.80 L294.0 678.80 L295.0 678.80 L296.0 678.80 L297.0 678.80 L298.0 678.80 L299.0 678.80 L300.0 678.80 L301.0 678.80 L302.0 678.80 L303.0 678.80 L304.0 678.80 L305.0 678.80 L306.0 678.80 L307.0 678.80 L308.0 678.80 L309.0 678.80 L310.0 678.80 L311.0 678.80 L312.0 678.80 L313.0 678.80 L314.0 678.80 L315.0 678.70 L316.0 678.11 L317.0 677.49 L318.0 676.85 L319.0 676.20 L320.0 675.52 L321.0 674.84 L322.0 674.14 L323.0 673.43 L324.0 672.72 L325.0 672.00 L326.0 671.28 L327.0 670.57 L328.0 669.86 L329.0 669.16 L330.0 668.48 L331.0 667.80 L332.0 667.15 L333.0 666.51 L334.0 665.89 L335.0 665.30 L336.0 664.73 L337.0 664.20 L338.0 663.69 L339.0 663.22 L340.0 662.78 L341.0 662.37 L342.0 662.01 L343.0 661.68 L344.0 661.40 L345.0 661.16 L346.0 660.96 L347.0 660.80 L348.0 660.69 L349.0 660.62 L350.0 660.60 L351.0 660.62 L352.0 660.69 L353.0 660.80 L354.0 660.96 L355.0 661.16 L356.0 661.40 L357.0 661.68 L358.0 662.01 L359.0 662.37 L360.0 662.78 L361.0 663.22 L362.0 663.69 L363.0 664.20 L364.0 664.73 L365.0 665.30 L366.0 665.89 L367.0 666.51 L368.0 667.15 L369.0 667.80 L370.0 668.48 L371.0 669.16 L372.0 669.86 L373.0 670.57 L374.0 671.28 L375.0 672.00 L376.0 672.72 L377.0 673.43 L378.0 674.14 L379.0 674.84 L380.0 675.52 L381.0 676.20 L382.0 676.85 L383.0 677.49 L384.0 678.11 L385.0 678.70 L386.0 678.80 L387.0 678.80 L388.0 678.80 L389.0 678.80 L390.0 678.80 L391.0 678.80 L392.0 678.80 L393.0 678.80 L394.0 678.80 L395.0 678.80 L396.0 678.80 L397.0 678.80 L398.0 678.80 L399.0 678.80 L400.0 678.80 L401.0 678.80 L402.0 678.80 L403.0 678.80 L404.0 678.80 L405.0 678.80 L406.0 678.80 L407.0 678.80 L408.0 678.80 L409.0 678.80 L410.0 678.80 L411.0 678.80 L412.0 678.80 L413.0 678.80 L414.0 678.80 L415.0 678.70 L416.0 678.11 L417.0 677.49 L418.0 676.85 L419.0 676.20 L420.0 675.52 L421.0 674.84 L422.0 674.14 L423.0 673.43 L424.0 672.72 L425.0 672.00 L426.0 671.28 L427.0 670.57 L428.0 669.86 L429.0 669.16 L430.0 668.48 L431.0 667.80 L432.0 667.15 L433.0 666.51 L434.0 665.89 L435.0 665.30 L436.0 664.73 L437.0 664.20 L438.0 663.69 L439.0 663.22 L440.0 662.78 L441.0 662.37 L442.0 662.01 L443.0 661.68 L444.0 661.40 L445.0 661.16" fill="none" stroke="#E8207E" stroke-width="1.15" stroke-linejoin="round"/>
<path d="M45.0 711.16 L46.0 710.96 L47.0 710.80 L48.0 710.69 L49.0 710.62 L50.0 710.60 L51.0 710.62 L52.0 710.69 L53.0 710.80 L54.0 710.96 L55.0 711.16 L56.0 711.40 L57.0 711.68 L58.0 712.01 L59.0 712.37 L60.0 712.78 L61.0 713.22 L62.0 713.69 L63.0 714.20 L64.0 714.73 L65.0 715.30 L66.0 715.89 L67.0 716.51 L68.0 717.15 L69.0 717.80 L70.0 718.48 L71.0 719.16 L72.0 719.86 L73.0 720.57 L74.0 721.28 L75.0 722.00 L76.0 722.72 L77.0 723.43 L78.0 724.14 L79.0 724.84 L80.0 725.52 L81.0 726.20 L82.0 726.85 L83.0 727.49 L84.0 728.11 L85.0 728.60 L86.0 728.60 L87.0 728.60 L88.0 728.60 L89.0 728.60 L90.0 728.60 L91.0 728.60 L92.0 728.60 L93.0 728.60 L94.0 728.60 L95.0 728.60 L96.0 728.60 L97.0 728.60 L98.0 728.60 L99.0 728.60 L100.0 728.60 L101.0 728.60 L102.0 728.60 L103.0 728.60 L104.0 728.60 L105.0 728.60 L106.0 728.60 L107.0 728.60 L108.0 728.60 L109.0 728.60 L110.0 728.60 L111.0 728.60 L112.0 728.60 L113.0 728.60 L114.0 728.60 L115.0 728.60 L116.0 728.11 L117.0 727.49 L118.0 726.85 L119.0 726.20 L120.0 725.52 L121.0 724.84 L122.0 724.14 L123.0 723.43 L124.0 722.72 L125.0 722.00 L126.0 721.28 L127.0 720.57 L128.0 719.86 L129.0 719.16 L130.0 718.48 L131.0 717.80 L132.0 717.15 L133.0 716.51 L134.0 715.89 L135.0 715.30 L136.0 714.73 L137.0 714.20 L138.0 713.69 L139.0 713.22 L140.0 712.78 L141.0 712.37 L142.0 712.01 L143.0 711.68 L144.0 711.40 L145.0 711.16 L146.0 710.96 L147.0 710.80 L148.0 710.69 L149.0 710.62 L150.0 710.60 L151.0 710.62 L152.0 710.69 L153.0 710.80 L154.0 710.96 L155.0 711.16 L156.0 711.40 L157.0 711.68 L158.0 712.01 L159.0 712.37 L160.0 712.78 L161.0 713.22 L162.0 713.69 L163.0 714.20 L164.0 714.73 L165.0 715.30 L166.0 715.89 L167.0 716.51 L168.0 717.15 L169.0 717.80 L170.0 718.48 L171.0 719.16 L172.0 719.86 L173.0 720.57 L174.0 721.28 L175.0 722.00 L176.0 722.72 L177.0 723.43 L178.0 724.14 L179.0 724.84 L180.0 725.52 L181.0 726.20 L182.0 726.85 L183.0 727.49 L184.0 728.11 L185.0 728.60 L186.0 728.60 L187.0 728.60 L188.0 728.60 L189.0 728.60 L190.0 728.60 L191.0 728.60 L192.0 728.60 L193.0 728.60 L194.0 728.60 L195.0 728.60 L196.0 728.60 L197.0 728.60 L198.0 728.60 L199.0 728.60 L200.0 728.60 L201.0 728.60 L202.0 728.60 L203.0 728.60 L204.0 728.60 L205.0 728.60 L206.0 728.60 L207.0 728.60 L208.0 728.60 L209.0 728.60 L210.0 728.60 L211.0 728.60 L212.0 728.60 L213.0 728.60 L214.0 728.60 L215.0 728.60 L216.0 728.11 L217.0 727.49 L218.0 726.85 L219.0 726.20 L220.0 725.52 L221.0 724.84 L222.0 724.14 L223.0 723.43 L224.0 722.72 L225.0 722.00 L226.0 721.28 L227.0 720.57 L228.0 719.86 L229.0 719.16 L230.0 718.48 L231.0 717.80 L232.0 717.15 L233.0 716.51 L234.0 715.89 L235.0 715.30 L236.0 714.73 L237.0 714.20 L238.0 713.69 L239.0 713.22 L240.0 712.78 L241.0 712.37 L242.0 712.01 L243.0 711.68 L244.0 711.40 L245.0 711.16 L246.0 710.96 L247.0 710.80 L248.0 710.69 L249.0 710.62 L250.0 710.60 L251.0 710.62 L252.0 710.69 L253.0 710.80 L254.0 710.96 L255.0 711.16 L256.0 711.40 L257.0 711.68 L258.0 712.01 L259.0 712.37 L260.0 712.78 L261.0 713.22 L262.0 713.69 L263.0 714.20 L264.0 714.73 L265.0 715.30 L266.0 715.89 L267.0 716.51 L268.0 717.15 L269.0 717.80 L270.0 718.48 L271.0 719.16 L272.0 719.86 L273.0 720.57 L274.0 721.28 L275.0 722.00 L276.0 722.72 L277.0 723.43 L278.0 724.14 L279.0 724.84 L280.0 725.52 L281.0 726.20 L282.0 726.85 L283.0 727.49 L284.0 728.11 L285.0 728.60 L286.0 728.60 L287.0 728.60 L288.0 728.60 L289.0 728.60 L290.0 728.60 L291.0 728.60 L292.0 728.60 L293.0 728.60 L294.0 728.60 L295.0 728.60 L296.0 728.60 L297.0 728.60 L298.0 728.60 L299.0 728.60 L300.0 728.60 L301.0 728.60 L302.0 728.60 L303.0 728.60 L304.0 728.60 L305.0 728.60 L306.0 728.60 L307.0 728.60 L308.0 728.60 L309.0 728.60 L310.0 728.60 L311.0 728.60 L312.0 728.60 L313.0 728.60 L314.0 728.60 L315.0 728.60 L316.0 728.11 L317.0 727.49 L318.0 726.85 L319.0 726.20 L320.0 725.52 L321.0 724.84 L322.0 724.14 L323.0 723.43 L324.0 722.72 L325.0 722.00 L326.0 721.28 L327.0 720.57 L328.0 719.86 L329.0 719.16 L330.0 718.48 L331.0 717.80 L332.0 717.15 L333.0 716.51 L334.0 715.89 L335.0 715.30 L336.0 714.73 L337.0 714.20 L338.0 713.69 L339.0 713.22 L340.0 712.78 L341.0 712.37 L342.0 712.01 L343.0 711.68 L344.0 711.40 L345.0 711.16 L346.0 710.96 L347.0 710.80 L348.0 710.69 L349.0 710.62 L350.0 710.60 L351.0 710.62 L352.0 710.69 L353.0 710.80 L354.0 710.96 L355.0 711.16 L356.0 711.40 L357.0 711.68 L358.0 712.01 L359.0 712.37 L360.0 712.78 L361.0 713.22 L362.0 713.69 L363.0 714.20 L364.0 714.73 L365.0 715.30 L366.0 715.89 L367.0 716.51 L368.0 717.15 L369.0 717.80 L370.0 718.48 L371.0 719.16 L372.0 719.86 L373.0 720.57 L374.0 721.28 L375.0 722.00 L376.0 722.72 L377.0 723.43 L378.0 724.14 L379.0 724.84 L380.0 725.52 L381.0 726.20 L382.0 726.85 L383.0 727.49 L384.0 728.11 L385.0 728.60 L386.0 728.60 L387.0 728.60 L388.0 728.60 L389.0 728.60 L390.0 728.60 L391.0 728.60 L392.0 728.60 L393.0 728.60 L394.0 728.60 L395.0 728.60 L396.0 728.60 L397.0 728.60 L398.0 728.60 L399.0 728.60 L400.0 728.60 L401.0 728.60 L402.0 728.60 L403.0 728.60 L404.0 728.60 L405.0 728.60 L406.0 728.60 L407.0 728.60 L408.0 728.60 L409.0 728.60 L410.0 728.60 L411.0 728.60 L412.0 728.60 L413.0 728.60 L414.0 728.60 L415.0 728.60 L416.0 728.11 L417.0 727.49 L418.0 726.85 L419.0 726.20 L420.0 725.52 L421.0 724.84 L422.0 724.14 L423.0 723.43 L424.0 722.72 L425.0 722.00 L426.0 721.28 L427.0 720.57 L428.0 719.86 L429.0 719.16 L430.0 718.48 L431.0 717.80 L432.0 717.15 L433.0 716.51 L434.0 715.89 L435.0 715.30 L436.0 714.73 L437.0 714.20 L438.0 713.69 L439.0 713.22 L440.0 712.78 L441.0 712.37 L442.0 712.01 L443.0 711.68 L444.0 711.40 L445.0 711.16" fill="none" stroke="#10B464" stroke-width="1.15" stroke-linejoin="round"/>
<g shape-rendering="crispEdges">
<rect x="448" y="398" width="283" height="424" fill="#A3A3A3" />
<rect x="448" y="398" width="1" height="424" fill="#000000" />
<rect x="449" y="424" width="282" height="1" fill="#000000" />
<rect x="449" y="609" width="282" height="1" fill="#000000" />
<rect x="449" y="636" width="282" height="1" fill="#000000" />
<rect x="449" y="821" width="282" height="1" fill="#000000" />
<rect x="449" y="425" width="282" height="1" fill="#E4E4E4" />
<rect x="449" y="610" width="282" height="1" fill="#E4E4E4" />
<rect x="449" y="637" width="282" height="1" fill="#E4E4E4" />
<rect x="448" y="398" width="1" height="424" fill="#000000" />
<rect x="449" y="398" width="1" height="424" fill="#E4E4E4" />
<rect x="542" y="398" width="1" height="424" fill="#000000" />
<rect x="543" y="398" width="1" height="424" fill="#E4E4E4" />
<rect x="636" y="398" width="1" height="424" fill="#000000" />
<rect x="637" y="398" width="1" height="424" fill="#E4E4E4" />
<rect x="730" y="398" width="1" height="424" fill="#000000" />
<rect x="731" y="398" width="1" height="425" fill="#D4D0C8" />
</g>
<text x="472" y="416.6" font-size="12" fill="#EE8A98" textLength="42" lengthAdjust="spacingAndGlyphs" class="b">Trigger</text>
<text x="463.5" y="627.8" font-size="12" fill="#F07E1E" textLength="60.5" lengthAdjust="spacingAndGlyphs" class="b">Horizontal</text>
<text x="560.5" y="417" font-size="12" fill="#FFFF00" textLength="57.5" lengthAdjust="spacingAndGlyphs" class="b">Channel A</text>
<text x="654.5" y="417" font-size="12" fill="#E6127E" textLength="57.5" lengthAdjust="spacingAndGlyphs" class="b">Channel C</text>
<text x="560.5" y="629" font-size="12" fill="#1C96E8" textLength="57.5" lengthAdjust="spacingAndGlyphs" class="b">Channel B</text>
<text x="654.5" y="629" font-size="12" fill="#12A24E" textLength="57.5" lengthAdjust="spacingAndGlyphs" class="b">Channel D</text>
<text x="557" y="435.2" font-size="9" fill="#303030" textLength="32.5" lengthAdjust="spacingAndGlyphs" stroke="#303030" stroke-width="0.25">Position</text>
<g shape-rendering="crispEdges">
<rect x="556" y="439" width="36" height="77" fill="#B3B3B3" />
<rect x="555.5" y="438.5" width="38" height="79" fill="none" stroke="#000000" stroke-width="1"/>
<rect x="554.5" y="437.5" width="38" height="79" fill="none" stroke="#FFFFFF" stroke-width="1"/>
<rect x="556" y="439" width="36" height="1" fill="#C6C6C6" />
<rect x="561" y="440" width="1" height="75" fill="#E6E6E6" />
<rect x="562" y="440" width="24" height="75" fill="url(#vd)" />
<rect x="586" y="440" width="1" height="75" fill="#000000" />
<rect x="587" y="440" width="1" height="75" fill="#BcBcBc" />
<rect x="562" y="443.5" width="3" height="1" fill="#5a5a5a" />
<rect x="583" y="443.5" width="3" height="1" fill="#5a5a5a" />
<rect x="562" y="447.5" width="3" height="1" fill="#5a5a5a" />
<rect x="583" y="447.5" width="3" height="1" fill="#5a5a5a" />
<rect x="562" y="451.5" width="3" height="1" fill="#5a5a5a" />
<rect x="583" y="451.5" width="3" height="1" fill="#5a5a5a" />
<rect x="562" y="455.5" width="3" height="1" fill="#5a5a5a" />
<rect x="583" y="455.5" width="3" height="1" fill="#5a5a5a" />
<rect x="562" y="459.5" width="4" height="1" fill="#5a5a5a" />
<rect x="582" y="459.5" width="4" height="1" fill="#5a5a5a" />
<rect x="562" y="463.5" width="3" height="1" fill="#5a5a5a" />
<rect x="583" y="463.5" width="3" height="1" fill="#5a5a5a" />
<rect x="562" y="467.5" width="3" height="1" fill="#5a5a5a" />
<rect x="583" y="467.5" width="3" height="1" fill="#5a5a5a" />
<rect x="562" y="471.5" width="3" height="1" fill="#5a5a5a" />
<rect x="583" y="471.5" width="3" height="1" fill="#5a5a5a" />
<rect x="562" y="475.5" width="3" height="1" fill="#5a5a5a" />
<rect x="583" y="475.5" width="3" height="1" fill="#5a5a5a" />
<rect x="562" y="479.5" width="4" height="1" fill="#5a5a5a" />
<rect x="582" y="479.5" width="4" height="1" fill="#5a5a5a" />
<rect x="562" y="483.5" width="3" height="1" fill="#5a5a5a" />
<rect x="583" y="483.5" width="3" height="1" fill="#5a5a5a" />
<rect x="562" y="487.5" width="3" height="1" fill="#5a5a5a" />
<rect x="583" y="487.5" width="3" height="1" fill="#5a5a5a" />
<rect x="562" y="491.5" width="3" height="1" fill="#5a5a5a" />
<rect x="583" y="491.5" width="3" height="1" fill="#5a5a5a" />
<rect x="562" y="495.5" width="3" height="1" fill="#5a5a5a" />
<rect x="583" y="495.5" width="3" height="1" fill="#5a5a5a" />
<rect x="562" y="499.5" width="4" height="1" fill="#5a5a5a" />
<rect x="582" y="499.5" width="4" height="1" fill="#5a5a5a" />
<rect x="562" y="503.5" width="3" height="1" fill="#5a5a5a" />
<rect x="583" y="503.5" width="3" height="1" fill="#5a5a5a" />
<rect x="562" y="507.5" width="3" height="1" fill="#5a5a5a" />
<rect x="583" y="507.5" width="3" height="1" fill="#5a5a5a" />
<rect x="562" y="511.5" width="3" height="1" fill="#5a5a5a" />
<rect x="583" y="511.5" width="3" height="1" fill="#5a5a5a" />
</g>
<clipPath id="c543_398"><rect x="562" y="440" width="24" height="75"/></clipPath>
<g clip-path="url(#c543_398)">
<text x="574" y="442.9" font-size="9" fill="#000000" text-anchor="middle" stroke="#000000" stroke-width="0.3">120</text>
<text x="574" y="462.9" font-size="9" fill="#000000" text-anchor="middle" stroke="#000000" stroke-width="0.3">130</text>
<text x="574" y="482.9" font-size="9" fill="#000000" text-anchor="middle" stroke="#000000" stroke-width="0.3">140</text>
<text x="574" y="502.9" font-size="9" fill="#000000" text-anchor="middle" stroke="#000000" stroke-width="0.3">150</text>
</g>
<path d="M556 471.5 v10 l5.5 -5 Z M592 471.5 v10 l-5.5 -5 Z" fill="#FF0000"/>
<path d="M549.5 465.4 l-3.6 7 h7.2 Z M549.5 487.4 l-3.6 -7 h7.2 Z" fill="#FFFF00"/>
<rect x="548.9" y="471.4" width="1.2" height="10" fill="#FFFF00"/>
<text x="618.3" y="440.4" font-size="9.3" fill="#303030" text-anchor="end" stroke="#303030" stroke-width="0.25">AC</text>
<text x="618.3" y="454.45" font-size="9.3" fill="#303030" text-anchor="end" stroke="#303030" stroke-width="0.25">DC</text>
<text x="618.3" y="468.5" font-size="9.3" fill="#303030" text-anchor="end" stroke="#303030" stroke-width="0.25">GND</text>
<text x="618.3" y="482.54999999999995" font-size="9.3" fill="#303030" text-anchor="end" stroke="#303030" stroke-width="0.25">OFF</text>
<g shape-rendering="crispEdges">
<rect x="621.5" y="428.5" width="13" height="62" fill="none" stroke="#000000" stroke-width="1"/>
<rect x="620.5" y="427.5" width="13" height="62" fill="none" stroke="#FFFFFF" stroke-width="1"/>
<rect x="626" y="433" width="2" height="51" fill="#000000" />
<rect x="628" y="434" width="1" height="50" fill="#E8E8E8" />
<rect x="622" y="429" width="11" height="14" fill="#E6E6E6" />
<rect x="622" y="429" width="11" height="1" fill="#FFFFFF" />
<rect x="622" y="429" width="1" height="14" fill="#FFFFFF" />
<rect x="632" y="429" width="1" height="14" fill="#6a6a6a" />
<rect x="622" y="442" width="11" height="1" fill="#6a6a6a" />
<rect x="624" y="431" width="7" height="1" fill="#4a4a4a" />
<rect x="624" y="434" width="7" height="1" fill="#4a4a4a" />
<rect x="624" y="437" width="7" height="1" fill="#4a4a4a" />
<rect x="624" y="440" width="7" height="1" fill="#4a4a4a" />
</g>
<text x="618.5" y="502.3" font-size="9.3" fill="#303030" textLength="23" lengthAdjust="spacingAndGlyphs" text-anchor="end" stroke="#303030" stroke-width="0.25">Invert</text>
<g shape-rendering="crispEdges">
<rect x="620" y="492" width="15" height="15" fill="#000000" />
<rect x="620" y="492" width="14" height="14" fill="url(#bd)" />
<rect x="620" y="492" width="14" height="1" fill="#B8B8B8" />
<rect x="620" y="492" width="1" height="14" fill="#B8B8B8" />
</g>
<text x="618" y="518.5" font-size="9.3" fill="#303030" textLength="17.5" lengthAdjust="spacingAndGlyphs" text-anchor="end" stroke="#303030" stroke-width="0.25">A+B</text>
<g shape-rendering="crispEdges">
<rect x="620" y="508" width="15" height="15" fill="#000000" />
<rect x="620" y="508" width="14" height="14" fill="url(#bd)" />
<rect x="620" y="508" width="14" height="1" fill="#B8B8B8" />
<rect x="620" y="508" width="1" height="14" fill="#B8B8B8" />
</g>
<path d="M546.5 607.5 L546.5 563.5 A44 44 0 0 1 612.93 525.65 L599.88 545.75 L571.5 573.5 L571.5 607.5 Z" fill="#FFFFFF" stroke="#3a3a3a" stroke-width="1"/>
<path d="M634.5 607.5 L634.5 563.5 A44 44 0 0 0 615.95 527.61 L602.90 547.71 L609.5 573.5 L609.5 607.5 Z" fill="#FFFFFF" stroke="#3a3a3a" stroke-width="1"/>
<path d="M569.89 583.61 L566.71 586.79 M563.61 574.20 L559.45 575.92 M561.40 563.10 L556.90 563.10 M563.61 552.00 L559.45 550.28 M569.89 542.59 L566.71 539.41 M579.30 536.31 L577.58 532.15 M590.40 534.10 L590.40 529.60 M601.50 536.31 L603.22 532.15 M610.91 542.59 L614.09 539.41 M617.19 552.00 L621.35 550.28 M619.40 563.10 L623.90 563.10 M617.19 574.20 L621.35 575.92 M610.91 583.61 L614.09 586.79 " stroke="#303030" stroke-width="0.9" fill="none"/>
<text x="561.3" y="592.9" font-size="6.9" fill="#282828" text-anchor="middle" stroke="#282828" stroke-width="0.2">20</text>
<text x="553.5" y="581.1" font-size="6.9" fill="#282828" text-anchor="middle" stroke="#282828" stroke-width="0.2">10</text>
<text x="551.6" y="566.1" font-size="6.9" fill="#282828" text-anchor="middle" stroke="#282828" stroke-width="0.2">5</text>
<text x="554.8" y="552.0" font-size="6.9" fill="#282828" text-anchor="middle" stroke="#282828" stroke-width="0.2">2</text>
<text x="563.3" y="539.1" font-size="6.9" fill="#282828" text-anchor="middle" stroke="#282828" stroke-width="0.2">1</text>
<text x="576.0" y="530.1" font-size="6.9" fill="#282828" text-anchor="middle" stroke="#282828" stroke-width="0.2">0.5</text>
<text x="591.2" y="527.3" font-size="6.9" fill="#282828" text-anchor="middle" stroke="#282828" stroke-width="0.2">0.2</text>
<text x="604.9" y="530.1" font-size="6.9" fill="#282828" text-anchor="middle" stroke="#282828" stroke-width="0.2">0.1</text>
<text x="618.9" y="539.1" font-size="6.9" fill="#282828" text-anchor="middle" stroke="#282828" stroke-width="0.2">50</text>
<text x="627.3" y="552.2" font-size="6.9" fill="#282828" text-anchor="middle" stroke="#282828" stroke-width="0.2">20</text>
<text x="629.8" y="566.1" font-size="6.9" fill="#282828" text-anchor="middle" stroke="#282828" stroke-width="0.2">10</text>
<text x="626.7" y="581.1" font-size="6.9" fill="#282828" text-anchor="middle" stroke="#282828" stroke-width="0.2">5</text>
<text x="618.0" y="592.9" font-size="6.9" fill="#282828" text-anchor="middle" stroke="#282828" stroke-width="0.2">2</text>
<text x="558.1" y="602.7" font-size="9.5" fill="#282828" text-anchor="middle" stroke="#282828" stroke-width="0.2">V</text>
<text x="622.5" y="602.7" font-size="9.5" fill="#282828" text-anchor="middle" stroke="#282828" stroke-width="0.2">mV</text>
<circle cx="592.0" cy="564.6" r="31" fill="url(#ks)"/>
<circle cx="590.4" cy="563.0" r="29.4" fill="url(#kg)" stroke="#565656" stroke-width="0.9"/>
<circle cx="590.6999999999999" cy="563.9" r="16" fill="url(#rg)"/>
<circle cx="590.4" cy="563.5" r="14.4" fill="url(#cg)"/>
<path d="M565.46 552.67 L575.30 551.12 L571.32 560.72 Z" fill="#FFFF00"/>
<path d="M600.44 573.04 L593.94 571.06 L598.46 566.54 Z" fill="#FFFF00"/>
<g shape-rendering="crispEdges">
<rect x="573" y="594" width="36" height="13" fill="#FFFFFF" />
<rect x="573" y="594" width="36" height="1" fill="#000000" />
<rect x="573" y="594" width="1" height="13" fill="#000000" />
</g>
<text x="575" y="604.3" font-size="9.5" fill="#000080">2</text>
<text x="651" y="435.2" font-size="9" fill="#303030" textLength="32.5" lengthAdjust="spacingAndGlyphs" stroke="#303030" stroke-width="0.25">Position</text>
<g shape-rendering="crispEdges">
<rect x="650" y="439" width="36" height="77" fill="#B3B3B3" />
<rect x="649.5" y="438.5" width="38" height="79" fill="none" stroke="#000000" stroke-width="1"/>
<rect x="648.5" y="437.5" width="38" height="79" fill="none" stroke="#FFFFFF" stroke-width="1"/>
<rect x="650" y="439" width="36" height="1" fill="#C6C6C6" />
<rect x="655" y="440" width="1" height="75" fill="#E6E6E6" />
<rect x="656" y="440" width="24" height="75" fill="url(#vd)" />
<rect x="680" y="440" width="1" height="75" fill="#000000" />
<rect x="681" y="440" width="1" height="75" fill="#BcBcBc" />
<rect x="656" y="444" width="3" height="1" fill="#5a5a5a" />
<rect x="677" y="444" width="3" height="1" fill="#5a5a5a" />
<rect x="656" y="448" width="3" height="1" fill="#5a5a5a" />
<rect x="677" y="448" width="3" height="1" fill="#5a5a5a" />
<rect x="656" y="452" width="3" height="1" fill="#5a5a5a" />
<rect x="677" y="452" width="3" height="1" fill="#5a5a5a" />
<rect x="656" y="456" width="4" height="1" fill="#5a5a5a" />
<rect x="676" y="456" width="4" height="1" fill="#5a5a5a" />
<rect x="656" y="460" width="3" height="1" fill="#5a5a5a" />
<rect x="677" y="460" width="3" height="1" fill="#5a5a5a" />
<rect x="656" y="464" width="3" height="1" fill="#5a5a5a" />
<rect x="677" y="464" width="3" height="1" fill="#5a5a5a" />
<rect x="656" y="468" width="3" height="1" fill="#5a5a5a" />
<rect x="677" y="468" width="3" height="1" fill="#5a5a5a" />
<rect x="656" y="472" width="3" height="1" fill="#5a5a5a" />
<rect x="677" y="472" width="3" height="1" fill="#5a5a5a" />
<rect x="656" y="476" width="4" height="1" fill="#5a5a5a" />
<rect x="676" y="476" width="4" height="1" fill="#5a5a5a" />
<rect x="656" y="480" width="3" height="1" fill="#5a5a5a" />
<rect x="677" y="480" width="3" height="1" fill="#5a5a5a" />
<rect x="656" y="484" width="3" height="1" fill="#5a5a5a" />
<rect x="677" y="484" width="3" height="1" fill="#5a5a5a" />
<rect x="656" y="488" width="3" height="1" fill="#5a5a5a" />
<rect x="677" y="488" width="3" height="1" fill="#5a5a5a" />
<rect x="656" y="492" width="3" height="1" fill="#5a5a5a" />
<rect x="677" y="492" width="3" height="1" fill="#5a5a5a" />
<rect x="656" y="496" width="4" height="1" fill="#5a5a5a" />
<rect x="676" y="496" width="4" height="1" fill="#5a5a5a" />
<rect x="656" y="500" width="3" height="1" fill="#5a5a5a" />
<rect x="677" y="500" width="3" height="1" fill="#5a5a5a" />
<rect x="656" y="504" width="3" height="1" fill="#5a5a5a" />
<rect x="677" y="504" width="3" height="1" fill="#5a5a5a" />
<rect x="656" y="508" width="3" height="1" fill="#5a5a5a" />
<rect x="677" y="508" width="3" height="1" fill="#5a5a5a" />
<rect x="656" y="512" width="3" height="1" fill="#5a5a5a" />
<rect x="677" y="512" width="3" height="1" fill="#5a5a5a" />
</g>
<clipPath id="c637_398"><rect x="656" y="440" width="24" height="75"/></clipPath>
<g clip-path="url(#c637_398)">
<text x="668" y="459.4" font-size="9" fill="#000000" text-anchor="middle" stroke="#000000" stroke-width="0.3">-80</text>
<text x="668" y="479.4" font-size="9" fill="#000000" text-anchor="middle" stroke="#000000" stroke-width="0.3">-70</text>
<text x="668" y="499.4" font-size="9" fill="#000000" text-anchor="middle" stroke="#000000" stroke-width="0.3">-60</text>
</g>
<path d="M650 471.5 v10 l5.5 -5 Z M686 471.5 v10 l-5.5 -5 Z" fill="#FF0000"/>
<path d="M643.5 465.4 l-3.6 7 h7.2 Z M643.5 487.4 l-3.6 -7 h7.2 Z" fill="#E6127E"/>
<rect x="642.9" y="471.4" width="1.2" height="10" fill="#E6127E"/>
<text x="712.3" y="440.4" font-size="9.3" fill="#303030" text-anchor="end" stroke="#303030" stroke-width="0.25">AC</text>
<text x="712.3" y="454.45" font-size="9.3" fill="#303030" text-anchor="end" stroke="#303030" stroke-width="0.25">DC</text>
<text x="712.3" y="468.5" font-size="9.3" fill="#303030" text-anchor="end" stroke="#303030" stroke-width="0.25">GND</text>
<text x="712.3" y="482.54999999999995" font-size="9.3" fill="#303030" text-anchor="end" stroke="#303030" stroke-width="0.25">OFF</text>
<g shape-rendering="crispEdges">
<rect x="715.5" y="428.5" width="13" height="62" fill="none" stroke="#000000" stroke-width="1"/>
<rect x="714.5" y="427.5" width="13" height="62" fill="none" stroke="#FFFFFF" stroke-width="1"/>
<rect x="720" y="433" width="2" height="51" fill="#000000" />
<rect x="722" y="434" width="1" height="50" fill="#E8E8E8" />
<rect x="716" y="429" width="11" height="14" fill="#E6E6E6" />
<rect x="716" y="429" width="11" height="1" fill="#FFFFFF" />
<rect x="716" y="429" width="1" height="14" fill="#FFFFFF" />
<rect x="726" y="429" width="1" height="14" fill="#6a6a6a" />
<rect x="716" y="442" width="11" height="1" fill="#6a6a6a" />
<rect x="718" y="431" width="7" height="1" fill="#4a4a4a" />
<rect x="718" y="434" width="7" height="1" fill="#4a4a4a" />
<rect x="718" y="437" width="7" height="1" fill="#4a4a4a" />
<rect x="718" y="440" width="7" height="1" fill="#4a4a4a" />
</g>
<text x="712.5" y="502.3" font-size="9.3" fill="#303030" textLength="23" lengthAdjust="spacingAndGlyphs" text-anchor="end" stroke="#303030" stroke-width="0.25">Invert</text>
<g shape-rendering="crispEdges">
<rect x="714" y="492" width="15" height="15" fill="#000000" />
<rect x="714" y="492" width="14" height="14" fill="url(#bd)" />
<rect x="714" y="492" width="14" height="1" fill="#B8B8B8" />
<rect x="714" y="492" width="1" height="14" fill="#B8B8B8" />
</g>
<text x="712" y="518.5" font-size="9.3" fill="#303030" textLength="17.5" lengthAdjust="spacingAndGlyphs" text-anchor="end" stroke="#303030" stroke-width="0.25">C+D</text>
<g shape-rendering="crispEdges">
<rect x="714" y="508" width="15" height="15" fill="#000000" />
<rect x="714" y="508" width="14" height="14" fill="url(#bd)" />
<rect x="714" y="508" width="14" height="1" fill="#B8B8B8" />
<rect x="714" y="508" width="1" height="14" fill="#B8B8B8" />
</g>
<path d="M640.5 607.5 L640.5 563.5 A44 44 0 0 1 706.93 525.65 L693.88 545.75 L665.5 573.5 L665.5 607.5 Z" fill="#FFFFFF" stroke="#3a3a3a" stroke-width="1"/>
<path d="M728.5 607.5 L728.5 563.5 A44 44 0 0 0 709.95 527.61 L696.90 547.71 L703.5 573.5 L703.5 607.5 Z" fill="#FFFFFF" stroke="#3a3a3a" stroke-width="1"/>
<path d="M663.89 583.61 L660.71 586.79 M657.61 574.20 L653.45 575.92 M655.40 563.10 L650.90 563.10 M657.61 552.00 L653.45 550.28 M663.89 542.59 L660.71 539.41 M673.30 536.31 L671.58 532.15 M684.40 534.10 L684.40 529.60 M695.50 536.31 L697.22 532.15 M704.91 542.59 L708.09 539.41 M711.19 552.00 L715.35 550.28 M713.40 563.10 L717.90 563.10 M711.19 574.20 L715.35 575.92 M704.91 583.61 L708.09 586.79 " stroke="#303030" stroke-width="0.9" fill="none"/>
<text x="655.3" y="592.9" font-size="6.9" fill="#282828" text-anchor="middle" stroke="#282828" stroke-width="0.2">20</text>
<text x="647.5" y="581.1" font-size="6.9" fill="#282828" text-anchor="middle" stroke="#282828" stroke-width="0.2">10</text>
<text x="645.6" y="566.1" font-size="6.9" fill="#282828" text-anchor="middle" stroke="#282828" stroke-width="0.2">5</text>
<text x="648.8" y="552.0" font-size="6.9" fill="#282828" text-anchor="middle" stroke="#282828" stroke-width="0.2">2</text>
<text x="657.3" y="539.1" font-size="6.9" fill="#282828" text-anchor="middle" stroke="#282828" stroke-width="0.2">1</text>
<text x="670.0" y="530.1" font-size="6.9" fill="#282828" text-anchor="middle" stroke="#282828" stroke-width="0.2">0.5</text>
<text x="685.2" y="527.3" font-size="6.9" fill="#282828" text-anchor="middle" stroke="#282828" stroke-width="0.2">0.2</text>
<text x="698.9" y="530.1" font-size="6.9" fill="#282828" text-anchor="middle" stroke="#282828" stroke-width="0.2">0.1</text>
<text x="712.9" y="539.1" font-size="6.9" fill="#282828" text-anchor="middle" stroke="#282828" stroke-width="0.2">50</text>
<text x="721.3" y="552.2" font-size="6.9" fill="#282828" text-anchor="middle" stroke="#282828" stroke-width="0.2">20</text>
<text x="723.8" y="566.1" font-size="6.9" fill="#282828" text-anchor="middle" stroke="#282828" stroke-width="0.2">10</text>
<text x="720.7" y="581.1" font-size="6.9" fill="#282828" text-anchor="middle" stroke="#282828" stroke-width="0.2">5</text>
<text x="712.0" y="592.9" font-size="6.9" fill="#282828" text-anchor="middle" stroke="#282828" stroke-width="0.2">2</text>
<text x="652.1" y="602.7" font-size="9.5" fill="#282828" text-anchor="middle" stroke="#282828" stroke-width="0.2">V</text>
<text x="716.5" y="602.7" font-size="9.5" fill="#282828" text-anchor="middle" stroke="#282828" stroke-width="0.2">mV</text>
<circle cx="686.0" cy="564.6" r="31" fill="url(#ks)"/>
<circle cx="684.4" cy="563.0" r="29.4" fill="url(#kg)" stroke="#565656" stroke-width="0.9"/>
<circle cx="684.6999999999999" cy="563.9" r="16" fill="url(#rg)"/>
<circle cx="684.4" cy="563.5" r="14.4" fill="url(#cg)"/>
<path d="M659.46 552.67 L669.30 551.12 L665.32 560.72 Z" fill="#E6127E"/>
<path d="M694.44 573.04 L687.94 571.06 L692.46 566.54 Z" fill="#E6127E"/>
<g shape-rendering="crispEdges">
<rect x="667" y="594" width="36" height="13" fill="#FFFFFF" />
<rect x="667" y="594" width="36" height="1" fill="#000000" />
<rect x="667" y="594" width="1" height="13" fill="#000000" />
</g>
<text x="669" y="604.3" font-size="9.5" fill="#000080">2</text>
<text x="557" y="647.2" font-size="9" fill="#303030" textLength="32.5" lengthAdjust="spacingAndGlyphs" stroke="#303030" stroke-width="0.25">Position</text>
<g shape-rendering="crispEdges">
<rect x="556" y="651" width="36" height="77" fill="#B3B3B3" />
<rect x="555.5" y="650.5" width="38" height="79" fill="none" stroke="#000000" stroke-width="1"/>
<rect x="554.5" y="649.5" width="38" height="79" fill="none" stroke="#FFFFFF" stroke-width="1"/>
<rect x="556" y="651" width="36" height="1" fill="#C6C6C6" />
<rect x="561" y="652" width="1" height="75" fill="#E6E6E6" />
<rect x="562" y="652" width="24" height="75" fill="url(#vd)" />
<rect x="586" y="652" width="1" height="75" fill="#000000" />
<rect x="587" y="652" width="1" height="75" fill="#BcBcBc" />
<rect x="562" y="656" width="3" height="1" fill="#5a5a5a" />
<rect x="583" y="656" width="3" height="1" fill="#5a5a5a" />
<rect x="562" y="660" width="3" height="1" fill="#5a5a5a" />
<rect x="583" y="660" width="3" height="1" fill="#5a5a5a" />
<rect x="562" y="664" width="3" height="1" fill="#5a5a5a" />
<rect x="583" y="664" width="3" height="1" fill="#5a5a5a" />
<rect x="562" y="668" width="4" height="1" fill="#5a5a5a" />
<rect x="582" y="668" width="4" height="1" fill="#5a5a5a" />
<rect x="562" y="672" width="3" height="1" fill="#5a5a5a" />
<rect x="583" y="672" width="3" height="1" fill="#5a5a5a" />
<rect x="562" y="676" width="3" height="1" fill="#5a5a5a" />
<rect x="583" y="676" width="3" height="1" fill="#5a5a5a" />
<rect x="562" y="680" width="3" height="1" fill="#5a5a5a" />
<rect x="583" y="680" width="3" height="1" fill="#5a5a5a" />
<rect x="562" y="684" width="3" height="1" fill="#5a5a5a" />
<rect x="583" y="684" width="3" height="1" fill="#5a5a5a" />
<rect x="562" y="688" width="4" height="1" fill="#5a5a5a" />
<rect x="582" y="688" width="4" height="1" fill="#5a5a5a" />
<rect x="562" y="692" width="3" height="1" fill="#5a5a5a" />
<rect x="583" y="692" width="3" height="1" fill="#5a5a5a" />
<rect x="562" y="696" width="3" height="1" fill="#5a5a5a" />
<rect x="583" y="696" width="3" height="1" fill="#5a5a5a" />
<rect x="562" y="700" width="3" height="1" fill="#5a5a5a" />
<rect x="583" y="700" width="3" height="1" fill="#5a5a5a" />
<rect x="562" y="704" width="3" height="1" fill="#5a5a5a" />
<rect x="583" y="704" width="3" height="1" fill="#5a5a5a" />
<rect x="562" y="708" width="4" height="1" fill="#5a5a5a" />
<rect x="582" y="708" width="4" height="1" fill="#5a5a5a" />
<rect x="562" y="712" width="3" height="1" fill="#5a5a5a" />
<rect x="583" y="712" width="3" height="1" fill="#5a5a5a" />
<rect x="562" y="716" width="3" height="1" fill="#5a5a5a" />
<rect x="583" y="716" width="3" height="1" fill="#5a5a5a" />
<rect x="562" y="720" width="3" height="1" fill="#5a5a5a" />
<rect x="583" y="720" width="3" height="1" fill="#5a5a5a" />
<rect x="562" y="724" width="3" height="1" fill="#5a5a5a" />
<rect x="583" y="724" width="3" height="1" fill="#5a5a5a" />
</g>
<clipPath id="c543_610"><rect x="562" y="652" width="24" height="75"/></clipPath>
<g clip-path="url(#c543_610)">
<text x="574" y="671.4" font-size="9" fill="#000000" text-anchor="middle" stroke="#000000" stroke-width="0.3">30</text>
<text x="574" y="691.4" font-size="9" fill="#000000" text-anchor="middle" stroke="#000000" stroke-width="0.3">40</text>
<text x="574" y="711.4" font-size="9" fill="#000000" text-anchor="middle" stroke="#000000" stroke-width="0.3">50</text>
</g>
<path d="M556 683.5 v10 l5.5 -5 Z M592 683.5 v10 l-5.5 -5 Z" fill="#FF0000"/>
<path d="M549.5 677.4 l-3.6 7 h7.2 Z M549.5 699.4 l-3.6 -7 h7.2 Z" fill="#1C96E8"/>
<rect x="548.9" y="683.4" width="1.2" height="10" fill="#1C96E8"/>
<text x="618.3" y="652.4" font-size="9.3" fill="#303030" text-anchor="end" stroke="#303030" stroke-width="0.25">AC</text>
<text x="618.3" y="666.4499999999999" font-size="9.3" fill="#303030" text-anchor="end" stroke="#303030" stroke-width="0.25">DC</text>
<text x="618.3" y="680.5" font-size="9.3" fill="#303030" text-anchor="end" stroke="#303030" stroke-width="0.25">GND</text>
<text x="618.3" y="694.55" font-size="9.3" fill="#303030" text-anchor="end" stroke="#303030" stroke-width="0.25">OFF</text>
<g shape-rendering="crispEdges">
<rect x="621.5" y="640.5" width="13" height="62" fill="none" stroke="#000000" stroke-width="1"/>
<rect x="620.5" y="639.5" width="13" height="62" fill="none" stroke="#FFFFFF" stroke-width="1"/>
<rect x="626" y="645" width="2" height="51" fill="#000000" />
<rect x="628" y="646" width="1" height="50" fill="#E8E8E8" />
<rect x="622" y="641" width="11" height="14" fill="#E6E6E6" />
<rect x="622" y="641" width="11" height="1" fill="#FFFFFF" />
<rect x="622" y="641" width="1" height="14" fill="#FFFFFF" />
<rect x="632" y="641" width="1" height="14" fill="#6a6a6a" />
<rect x="622" y="654" width="11" height="1" fill="#6a6a6a" />
<rect x="624" y="643" width="7" height="1" fill="#4a4a4a" />
<rect x="624" y="646" width="7" height="1" fill="#4a4a4a" />
<rect x="624" y="649" width="7" height="1" fill="#4a4a4a" />
<rect x="624" y="652" width="7" height="1" fill="#4a4a4a" />
</g>
<text x="618.5" y="714.3" font-size="9.3" fill="#303030" textLength="23" lengthAdjust="spacingAndGlyphs" text-anchor="end" stroke="#303030" stroke-width="0.25">Invert</text>
<g shape-rendering="crispEdges">
<rect x="620" y="704" width="15" height="15" fill="#000000" />
<rect x="620" y="704" width="14" height="14" fill="url(#bd)" />
<rect x="620" y="704" width="14" height="1" fill="#B8B8B8" />
<rect x="620" y="704" width="1" height="14" fill="#B8B8B8" />
</g>
<path d="M546.5 819.5 L546.5 775.5 A44 44 0 0 1 612.93 737.65 L599.88 757.75 L571.5 785.5 L571.5 819.5 Z" fill="#FFFFFF" stroke="#3a3a3a" stroke-width="1"/>
<path d="M634.5 819.5 L634.5 775.5 A44 44 0 0 0 615.95 739.61 L602.90 759.71 L609.5 785.5 L609.5 819.5 Z" fill="#FFFFFF" stroke="#3a3a3a" stroke-width="1"/>
<path d="M569.89 795.61 L566.71 798.79 M563.61 786.20 L559.45 787.92 M561.40 775.10 L556.90 775.10 M563.61 764.00 L559.45 762.28 M569.89 754.59 L566.71 751.41 M579.30 748.31 L577.58 744.15 M590.40 746.10 L590.40 741.60 M601.50 748.31 L603.22 744.15 M610.91 754.59 L614.09 751.41 M617.19 764.00 L621.35 762.28 M619.40 775.10 L623.90 775.10 M617.19 786.20 L621.35 787.92 M610.91 795.61 L614.09 798.79 " stroke="#303030" stroke-width="0.9" fill="none"/>
<text x="561.3" y="804.9" font-size="6.9" fill="#282828" text-anchor="middle" stroke="#282828" stroke-width="0.2">20</text>
<text x="553.5" y="793.1" font-size="6.9" fill="#282828" text-anchor="middle" stroke="#282828" stroke-width="0.2">10</text>
<text x="551.6" y="778.1" font-size="6.9" fill="#282828" text-anchor="middle" stroke="#282828" stroke-width="0.2">5</text>
<text x="554.8" y="764.0" font-size="6.9" fill="#282828" text-anchor="middle" stroke="#282828" stroke-width="0.2">2</text>
<text x="563.3" y="751.1" font-size="6.9" fill="#282828" text-anchor="middle" stroke="#282828" stroke-width="0.2">1</text>
<text x="576.0" y="742.1" font-size="6.9" fill="#282828" text-anchor="middle" stroke="#282828" stroke-width="0.2">0.5</text>
<text x="591.2" y="739.3" font-size="6.9" fill="#282828" text-anchor="middle" stroke="#282828" stroke-width="0.2">0.2</text>
<text x="604.9" y="742.1" font-size="6.9" fill="#282828" text-anchor="middle" stroke="#282828" stroke-width="0.2">0.1</text>
<text x="618.9" y="751.1" font-size="6.9" fill="#282828" text-anchor="middle" stroke="#282828" stroke-width="0.2">50</text>
<text x="627.3" y="764.2" font-size="6.9" fill="#282828" text-anchor="middle" stroke="#282828" stroke-width="0.2">20</text>
<text x="629.8" y="778.1" font-size="6.9" fill="#282828" text-anchor="middle" stroke="#282828" stroke-width="0.2">10</text>
<text x="626.7" y="793.1" font-size="6.9" fill="#282828" text-anchor="middle" stroke="#282828" stroke-width="0.2">5</text>
<text x="618.0" y="804.9" font-size="6.9" fill="#282828" text-anchor="middle" stroke="#282828" stroke-width="0.2">2</text>
<text x="558.1" y="814.7" font-size="9.5" fill="#282828" text-anchor="middle" stroke="#282828" stroke-width="0.2">V</text>
<text x="622.5" y="814.7" font-size="9.5" fill="#282828" text-anchor="middle" stroke="#282828" stroke-width="0.2">mV</text>
<circle cx="592.0" cy="776.6" r="31" fill="url(#ks)"/>
<circle cx="590.4" cy="775.0" r="29.4" fill="url(#kg)" stroke="#565656" stroke-width="0.9"/>
<circle cx="590.6999999999999" cy="775.9" r="16" fill="url(#rg)"/>
<circle cx="590.4" cy="775.5" r="14.4" fill="url(#cg)"/>
<path d="M565.46 764.67 L575.30 763.12 L571.32 772.72 Z" fill="#1C96E8"/>
<path d="M600.44 785.04 L593.94 783.06 L598.46 778.54 Z" fill="#1C96E8"/>
<g shape-rendering="crispEdges">
<rect x="573" y="806" width="36" height="13" fill="#FFFFFF" />
<rect x="573" y="806" width="36" height="1" fill="#000000" />
<rect x="573" y="806" width="1" height="13" fill="#000000" />
</g>
<text x="575" y="816.3" font-size="9.5" fill="#000080">2</text>
<text x="651" y="647.2" font-size="9" fill="#303030" textLength="32.5" lengthAdjust="spacingAndGlyphs" stroke="#303030" stroke-width="0.25">Position</text>
<g shape-rendering="crispEdges">
<rect x="650" y="651" width="36" height="77" fill="#B3B3B3" />
<rect x="649.5" y="650.5" width="38" height="79" fill="none" stroke="#000000" stroke-width="1"/>
<rect x="648.5" y="649.5" width="38" height="79" fill="none" stroke="#FFFFFF" stroke-width="1"/>
<rect x="650" y="651" width="36" height="1" fill="#C6C6C6" />
<rect x="655" y="652" width="1" height="75" fill="#E6E6E6" />
<rect x="656" y="652" width="24" height="75" fill="url(#vd)" />
<rect x="680" y="652" width="1" height="75" fill="#000000" />
<rect x="681" y="652" width="1" height="75" fill="#BcBcBc" />
<rect x="656" y="656" width="3" height="1" fill="#5a5a5a" />
<rect x="677" y="656" width="3" height="1" fill="#5a5a5a" />
<rect x="656" y="660" width="3" height="1" fill="#5a5a5a" />
<rect x="677" y="660" width="3" height="1" fill="#5a5a5a" />
<rect x="656" y="664" width="3" height="1" fill="#5a5a5a" />
<rect x="677" y="664" width="3" height="1" fill="#5a5a5a" />
<rect x="656" y="668" width="4" height="1" fill="#5a5a5a" />
<rect x="676" y="668" width="4" height="1" fill="#5a5a5a" />
<rect x="656" y="672" width="3" height="1" fill="#5a5a5a" />
<rect x="677" y="672" width="3" height="1" fill="#5a5a5a" />
<rect x="656" y="676" width="3" height="1" fill="#5a5a5a" />
<rect x="677" y="676" width="3" height="1" fill="#5a5a5a" />
<rect x="656" y="680" width="3" height="1" fill="#5a5a5a" />
<rect x="677" y="680" width="3" height="1" fill="#5a5a5a" />
<rect x="656" y="684" width="3" height="1" fill="#5a5a5a" />
<rect x="677" y="684" width="3" height="1" fill="#5a5a5a" />
<rect x="656" y="688" width="4" height="1" fill="#5a5a5a" />
<rect x="676" y="688" width="4" height="1" fill="#5a5a5a" />
<rect x="656" y="692" width="3" height="1" fill="#5a5a5a" />
<rect x="677" y="692" width="3" height="1" fill="#5a5a5a" />
<rect x="656" y="696" width="3" height="1" fill="#5a5a5a" />
<rect x="677" y="696" width="3" height="1" fill="#5a5a5a" />
<rect x="656" y="700" width="3" height="1" fill="#5a5a5a" />
<rect x="677" y="700" width="3" height="1" fill="#5a5a5a" />
<rect x="656" y="704" width="3" height="1" fill="#5a5a5a" />
<rect x="677" y="704" width="3" height="1" fill="#5a5a5a" />
<rect x="656" y="708" width="4" height="1" fill="#5a5a5a" />
<rect x="676" y="708" width="4" height="1" fill="#5a5a5a" />
<rect x="656" y="712" width="3" height="1" fill="#5a5a5a" />
<rect x="677" y="712" width="3" height="1" fill="#5a5a5a" />
<rect x="656" y="716" width="3" height="1" fill="#5a5a5a" />
<rect x="677" y="716" width="3" height="1" fill="#5a5a5a" />
<rect x="656" y="720" width="3" height="1" fill="#5a5a5a" />
<rect x="677" y="720" width="3" height="1" fill="#5a5a5a" />
<rect x="656" y="724" width="3" height="1" fill="#5a5a5a" />
<rect x="677" y="724" width="3" height="1" fill="#5a5a5a" />
</g>
<clipPath id="c637_610"><rect x="656" y="652" width="24" height="75"/></clipPath>
<g clip-path="url(#c637_610)">
<text x="668" y="671.4" font-size="9" fill="#000000" text-anchor="middle" stroke="#000000" stroke-width="0.3">-130</text>
<text x="668" y="691.4" font-size="9" fill="#000000" text-anchor="middle" stroke="#000000" stroke-width="0.3">-120</text>
<text x="668" y="711.4" font-size="9" fill="#000000" text-anchor="middle" stroke="#000000" stroke-width="0.3">-110</text>
</g>
<path d="M650 683.5 v10 l5.5 -5 Z M686 683.5 v10 l-5.5 -5 Z" fill="#FF0000"/>
<path d="M643.5 677.4 l-3.6 7 h7.2 Z M643.5 699.4 l-3.6 -7 h7.2 Z" fill="#12A24E"/>
<rect x="642.9" y="683.4" width="1.2" height="10" fill="#12A24E"/>
<text x="712.3" y="652.4" font-size="9.3" fill="#303030" text-anchor="end" stroke="#303030" stroke-width="0.25">AC</text>
<text x="712.3" y="666.4499999999999" font-size="9.3" fill="#303030" text-anchor="end" stroke="#303030" stroke-width="0.25">DC</text>
<text x="712.3" y="680.5" font-size="9.3" fill="#303030" text-anchor="end" stroke="#303030" stroke-width="0.25">GND</text>
<text x="712.3" y="694.55" font-size="9.3" fill="#303030" text-anchor="end" stroke="#303030" stroke-width="0.25">OFF</text>
<g shape-rendering="crispEdges">
<rect x="715.5" y="640.5" width="13" height="62" fill="none" stroke="#000000" stroke-width="1"/>
<rect x="714.5" y="639.5" width="13" height="62" fill="none" stroke="#FFFFFF" stroke-width="1"/>
<rect x="720" y="645" width="2" height="51" fill="#000000" />
<rect x="722" y="646" width="1" height="50" fill="#E8E8E8" />
<rect x="716" y="641" width="11" height="14" fill="#E6E6E6" />
<rect x="716" y="641" width="11" height="1" fill="#FFFFFF" />
<rect x="716" y="641" width="1" height="14" fill="#FFFFFF" />
<rect x="726" y="641" width="1" height="14" fill="#6a6a6a" />
<rect x="716" y="654" width="11" height="1" fill="#6a6a6a" />
<rect x="718" y="643" width="7" height="1" fill="#4a4a4a" />
<rect x="718" y="646" width="7" height="1" fill="#4a4a4a" />
<rect x="718" y="649" width="7" height="1" fill="#4a4a4a" />
<rect x="718" y="652" width="7" height="1" fill="#4a4a4a" />
</g>
<text x="712.5" y="714.3" font-size="9.3" fill="#303030" textLength="23" lengthAdjust="spacingAndGlyphs" text-anchor="end" stroke="#303030" stroke-width="0.25">Invert</text>
<g shape-rendering="crispEdges">
<rect x="714" y="704" width="15" height="15" fill="#000000" />
<rect x="714" y="704" width="14" height="14" fill="url(#bd)" />
<rect x="714" y="704" width="14" height="1" fill="#B8B8B8" />
<rect x="714" y="704" width="1" height="14" fill="#B8B8B8" />
</g>
<path d="M640.5 819.5 L640.5 775.5 A44 44 0 0 1 706.93 737.65 L693.88 757.75 L665.5 785.5 L665.5 819.5 Z" fill="#FFFFFF" stroke="#3a3a3a" stroke-width="1"/>
<path d="M728.5 819.5 L728.5 775.5 A44 44 0 0 0 709.95 739.61 L696.90 759.71 L703.5 785.5 L703.5 819.5 Z" fill="#FFFFFF" stroke="#3a3a3a" stroke-width="1"/>
<path d="M663.89 795.61 L660.71 798.79 M657.61 786.20 L653.45 787.92 M655.40 775.10 L650.90 775.10 M657.61 764.00 L653.45 762.28 M663.89 754.59 L660.71 751.41 M673.30 748.31 L671.58 744.15 M684.40 746.10 L684.40 741.60 M695.50 748.31 L697.22 744.15 M704.91 754.59 L708.09 751.41 M711.19 764.00 L715.35 762.28 M713.40 775.10 L717.90 775.10 M711.19 786.20 L715.35 787.92 M704.91 795.61 L708.09 798.79 " stroke="#303030" stroke-width="0.9" fill="none"/>
<text x="655.3" y="804.9" font-size="6.9" fill="#282828" text-anchor="middle" stroke="#282828" stroke-width="0.2">20</text>
<text x="647.5" y="793.1" font-size="6.9" fill="#282828" text-anchor="middle" stroke="#282828" stroke-width="0.2">10</text>
<text x="645.6" y="778.1" font-size="6.9" fill="#282828" text-anchor="middle" stroke="#282828" stroke-width="0.2">5</text>
<text x="648.8" y="764.0" font-size="6.9" fill="#282828" text-anchor="middle" stroke="#282828" stroke-width="0.2">2</text>
<text x="657.3" y="751.1" font-size="6.9" fill="#282828" text-anchor="middle" stroke="#282828" stroke-width="0.2">1</text>
<text x="670.0" y="742.1" font-size="6.9" fill="#282828" text-anchor="middle" stroke="#282828" stroke-width="0.2">0.5</text>
<text x="685.2" y="739.3" font-size="6.9" fill="#282828" text-anchor="middle" stroke="#282828" stroke-width="0.2">0.2</text>
<text x="698.9" y="742.1" font-size="6.9" fill="#282828" text-anchor="middle" stroke="#282828" stroke-width="0.2">0.1</text>
<text x="712.9" y="751.1" font-size="6.9" fill="#282828" text-anchor="middle" stroke="#282828" stroke-width="0.2">50</text>
<text x="721.3" y="764.2" font-size="6.9" fill="#282828" text-anchor="middle" stroke="#282828" stroke-width="0.2">20</text>
<text x="723.8" y="778.1" font-size="6.9" fill="#282828" text-anchor="middle" stroke="#282828" stroke-width="0.2">10</text>
<text x="720.7" y="793.1" font-size="6.9" fill="#282828" text-anchor="middle" stroke="#282828" stroke-width="0.2">5</text>
<text x="712.0" y="804.9" font-size="6.9" fill="#282828" text-anchor="middle" stroke="#282828" stroke-width="0.2">2</text>
<text x="652.1" y="814.7" font-size="9.5" fill="#282828" text-anchor="middle" stroke="#282828" stroke-width="0.2">V</text>
<text x="716.5" y="814.7" font-size="9.5" fill="#282828" text-anchor="middle" stroke="#282828" stroke-width="0.2">mV</text>
<circle cx="686.0" cy="776.6" r="31" fill="url(#ks)"/>
<circle cx="684.4" cy="775.0" r="29.4" fill="url(#kg)" stroke="#565656" stroke-width="0.9"/>
<circle cx="684.6999999999999" cy="775.9" r="16" fill="url(#rg)"/>
<circle cx="684.4" cy="775.5" r="14.4" fill="url(#cg)"/>
<path d="M659.46 764.67 L669.30 763.12 L665.32 772.72 Z" fill="#12A24E"/>
<path d="M694.44 785.04 L687.94 783.06 L692.46 778.54 Z" fill="#12A24E"/>
<g shape-rendering="crispEdges">
<rect x="667" y="806" width="36" height="13" fill="#FFFFFF" />
<rect x="667" y="806" width="36" height="1" fill="#000000" />
<rect x="667" y="806" width="1" height="13" fill="#000000" />
</g>
<text x="669" y="816.3" font-size="9.5" fill="#000080">2</text>
<text x="469.5" y="435.2" font-size="9" fill="#303030" textLength="22" lengthAdjust="spacingAndGlyphs" stroke="#303030" stroke-width="0.25">Level</text>
<g shape-rendering="crispEdges">
<rect x="462" y="439" width="36" height="77" fill="#B3B3B3" />
<rect x="461.5" y="438.5" width="38" height="79" fill="none" stroke="#000000" stroke-width="1"/>
<rect x="460.5" y="437.5" width="38" height="79" fill="none" stroke="#FFFFFF" stroke-width="1"/>
<rect x="462" y="439" width="36" height="1" fill="#C6C6C6" />
<rect x="467" y="440" width="1" height="75" fill="#E6E6E6" />
<rect x="468" y="440" width="24" height="75" fill="url(#vd)" />
<rect x="492" y="440" width="1" height="75" fill="#000000" />
<rect x="493" y="440" width="1" height="75" fill="#BcBcBc" />
<rect x="468" y="444" width="3" height="1" fill="#5a5a5a" />
<rect x="489" y="444" width="3" height="1" fill="#5a5a5a" />
<rect x="468" y="448" width="3" height="1" fill="#5a5a5a" />
<rect x="489" y="448" width="3" height="1" fill="#5a5a5a" />
<rect x="468" y="452" width="3" height="1" fill="#5a5a5a" />
<rect x="489" y="452" width="3" height="1" fill="#5a5a5a" />
<rect x="468" y="456" width="4" height="1" fill="#5a5a5a" />
<rect x="488" y="456" width="4" height="1" fill="#5a5a5a" />
<rect x="468" y="460" width="3" height="1" fill="#5a5a5a" />
<rect x="489" y="460" width="3" height="1" fill="#5a5a5a" />
<rect x="468" y="464" width="3" height="1" fill="#5a5a5a" />
<rect x="489" y="464" width="3" height="1" fill="#5a5a5a" />
<rect x="468" y="468" width="3" height="1" fill="#5a5a5a" />
<rect x="489" y="468" width="3" height="1" fill="#5a5a5a" />
<rect x="468" y="472" width="3" height="1" fill="#5a5a5a" />
<rect x="489" y="472" width="3" height="1" fill="#5a5a5a" />
<rect x="468" y="476" width="4" height="1" fill="#5a5a5a" />
<rect x="488" y="476" width="4" height="1" fill="#5a5a5a" />
<rect x="468" y="480" width="3" height="1" fill="#5a5a5a" />
<rect x="489" y="480" width="3" height="1" fill="#5a5a5a" />
<rect x="468" y="484" width="3" height="1" fill="#5a5a5a" />
<rect x="489" y="484" width="3" height="1" fill="#5a5a5a" />
<rect x="468" y="488" width="3" height="1" fill="#5a5a5a" />
<rect x="489" y="488" width="3" height="1" fill="#5a5a5a" />
<rect x="468" y="492" width="3" height="1" fill="#5a5a5a" />
<rect x="489" y="492" width="3" height="1" fill="#5a5a5a" />
<rect x="468" y="496" width="4" height="1" fill="#5a5a5a" />
<rect x="488" y="496" width="4" height="1" fill="#5a5a5a" />
<rect x="468" y="500" width="3" height="1" fill="#5a5a5a" />
<rect x="489" y="500" width="3" height="1" fill="#5a5a5a" />
<rect x="468" y="504" width="3" height="1" fill="#5a5a5a" />
<rect x="489" y="504" width="3" height="1" fill="#5a5a5a" />
<rect x="468" y="508" width="3" height="1" fill="#5a5a5a" />
<rect x="489" y="508" width="3" height="1" fill="#5a5a5a" />
<rect x="468" y="512" width="3" height="1" fill="#5a5a5a" />
<rect x="489" y="512" width="3" height="1" fill="#5a5a5a" />
</g>
<clipPath id="c449_398"><rect x="468" y="440" width="24" height="75"/></clipPath>
<g clip-path="url(#c449_398)">
<text x="480" y="459.4" font-size="9" fill="#000000" text-anchor="middle" stroke="#000000" stroke-width="0.3">-10</text>
<text x="480" y="479.4" font-size="9" fill="#000000" text-anchor="middle" stroke="#000000" stroke-width="0.3">0</text>
<text x="480" y="499.4" font-size="9" fill="#000000" text-anchor="middle" stroke="#000000" stroke-width="0.3">10</text>
</g>
<path d="M462 471.5 v10 l5.5 -5 Z M498 471.5 v10 l-5.5 -5 Z" fill="#FF0000"/>
<path d="M455.5 464 l-3.6 7 h7.2 Z M455.5 486 l-3.6 -7 h7.2 Z" fill="#EC8C9A"/>
<rect x="454.9" y="470" width="1.2" height="10" fill="#EC8C9A"/>
<text x="524.3" y="440.4" font-size="9.3" fill="#303030" text-anchor="end" stroke="#303030" stroke-width="0.25">AC</text>
<text x="524.3" y="454.4" font-size="9.3" fill="#303030" text-anchor="end" stroke="#303030" stroke-width="0.25">DC</text>
<g shape-rendering="crispEdges">
<rect x="527.5" y="428.5" width="13" height="32" fill="none" stroke="#000000" stroke-width="1"/>
<rect x="526.5" y="427.5" width="13" height="32" fill="none" stroke="#FFFFFF" stroke-width="1"/>
<rect x="532" y="433" width="2" height="21" fill="#000000" />
<rect x="534" y="434" width="1" height="20" fill="#E8E8E8" />
<rect x="528" y="444" width="11" height="14" fill="#E6E6E6" />
<rect x="528" y="444" width="11" height="1" fill="#FFFFFF" />
<rect x="528" y="444" width="1" height="14" fill="#FFFFFF" />
<rect x="538" y="444" width="1" height="14" fill="#6a6a6a" />
<rect x="528" y="457" width="11" height="1" fill="#6a6a6a" />
<rect x="530" y="446" width="7" height="1" fill="#4a4a4a" />
<rect x="530" y="449" width="7" height="1" fill="#4a4a4a" />
<rect x="530" y="452" width="7" height="1" fill="#4a4a4a" />
<rect x="530" y="455" width="7" height="1" fill="#4a4a4a" />
</g>
<g shape-rendering="crispEdges">
<rect x="527.5" y="473.5" width="13" height="32" fill="none" stroke="#000000" stroke-width="1"/>
<rect x="526.5" y="472.5" width="13" height="32" fill="none" stroke="#FFFFFF" stroke-width="1"/>
<rect x="532" y="478" width="2" height="21" fill="#000000" />
<rect x="534" y="479" width="1" height="20" fill="#E8E8E8" />
<rect x="528" y="474" width="11" height="14" fill="#E6E6E6" />
<rect x="528" y="474" width="11" height="1" fill="#FFFFFF" />
<rect x="528" y="474" width="1" height="14" fill="#FFFFFF" />
<rect x="538" y="474" width="1" height="14" fill="#6a6a6a" />
<rect x="528" y="487" width="11" height="1" fill="#6a6a6a" />
<rect x="530" y="476" width="7" height="1" fill="#4a4a4a" />
<rect x="530" y="479" width="7" height="1" fill="#4a4a4a" />
<rect x="530" y="482" width="7" height="1" fill="#4a4a4a" />
<rect x="530" y="485" width="7" height="1" fill="#4a4a4a" />
</g>
<path d="M515.5 486.5 H519.5 V476.5 H523 M515.5 491.5 H519.5 V501.5 H523" fill="none" stroke="#3c3c3c" stroke-width="1" shape-rendering="crispEdges"/>
<text x="523.5" y="528.8" font-size="9.3" fill="#303030" textLength="18.5" lengthAdjust="spacingAndGlyphs" text-anchor="end" stroke="#303030" stroke-width="0.25">Auto</text>
<text x="524" y="544" font-size="9.3" fill="#303030" textLength="39" lengthAdjust="spacingAndGlyphs" text-anchor="end" stroke="#303030" stroke-width="0.25">One-Shot</text>
<text x="524" y="559.8" font-size="9.3" fill="#303030" textLength="35.5" lengthAdjust="spacingAndGlyphs" text-anchor="end" stroke="#303030" stroke-width="0.25">Cursors</text>
<g shape-rendering="crispEdges">
<rect x="526" y="518" width="15" height="15" fill="#000000" />
<rect x="526" y="518" width="14" height="14" fill="url(#bl)" />
<rect x="526" y="518" width="14" height="1" fill="#FFFFFF" />
<rect x="526" y="518" width="1" height="14" fill="#FFFFFF" />
</g>
<g shape-rendering="crispEdges">
<rect x="526" y="534" width="15" height="15" fill="#000000" />
<rect x="526" y="534" width="14" height="14" fill="url(#bd)" />
<rect x="526" y="534" width="14" height="1" fill="#B8B8B8" />
<rect x="526" y="534" width="1" height="14" fill="#B8B8B8" />
</g>
<g shape-rendering="crispEdges">
<rect x="526" y="550" width="15" height="15" fill="#000000" />
<rect x="526" y="550" width="14" height="14" fill="url(#bd)" />
<rect x="526" y="550" width="14" height="1" fill="#B8B8B8" />
<rect x="526" y="550" width="1" height="14" fill="#B8B8B8" />
</g>
<text x="481" y="580" font-size="9" fill="#303030" textLength="29" lengthAdjust="spacingAndGlyphs" stroke="#303030" stroke-width="0.25">Source</text>
<text x="472.5" y="591" font-size="9.3" fill="#FFFF00" class="b">A</text>
<text x="487.3" y="591" font-size="9.3" fill="#1C96E8" class="b">B</text>
<text x="501.7" y="591" font-size="9.3" fill="#E6127E" class="b">C</text>
<text x="515.8" y="591" font-size="9.3" fill="#12A24E" class="b">D</text>
<g shape-rendering="crispEdges">
<rect x="465.5" y="594.5" width="62" height="13" fill="none" stroke="#000000" stroke-width="1"/>
<rect x="464.5" y="593.5" width="62" height="13" fill="none" stroke="#FFFFFF" stroke-width="1"/>
<rect x="480" y="599" width="40" height="2" fill="#000000" />
<rect x="481" y="601" width="40" height="1" fill="#E8E8E8" />
<rect x="466" y="595" width="15" height="10" fill="#E2E2E2" />
<rect x="466" y="595" width="15" height="1" fill="#FFFFFF" />
<rect x="466" y="595" width="1" height="10" fill="#FFFFFF" />
<rect x="480" y="595" width="1" height="10" fill="#6a6a6a" />
<rect x="466" y="604" width="15" height="1" fill="#6a6a6a" />
<rect x="469" y="597" width="1" height="7" fill="#4a4a4a" />
<rect x="472" y="597" width="1" height="7" fill="#4a4a4a" />
<rect x="475" y="597" width="1" height="7" fill="#4a4a4a" />
<rect x="478" y="597" width="1" height="7" fill="#4a4a4a" />
</g>
<text x="481" y="649.8" font-size="9" fill="#303030" textLength="28.5" lengthAdjust="spacingAndGlyphs" stroke="#303030" stroke-width="0.25">Source</text>
<path d="M461.3 659.4 L471.3 653.2 L471.3 658.8" fill="none" stroke="#F08A30" stroke-width="1.3"/>
<text x="478.2" y="659" font-size="9.3" fill="#FFFF00" class="b">A</text>
<text x="493.2" y="659" font-size="9.3" fill="#1C96E8" class="b">B</text>
<text x="507.6" y="659" font-size="9.3" fill="#E6127E" class="b">C</text>
<text x="522" y="659" font-size="9.3" fill="#12A24E" class="b">D</text>
<g shape-rendering="crispEdges">
<rect x="458.5" y="663.5" width="78" height="13" fill="none" stroke="#000000" stroke-width="1"/>
<rect x="457.5" y="662.5" width="78" height="13" fill="none" stroke="#FFFFFF" stroke-width="1"/>
<rect x="473" y="668" width="56" height="2" fill="#000000" />
<rect x="474" y="670" width="56" height="1" fill="#E8E8E8" />
<rect x="459" y="664" width="15" height="10" fill="#E2E2E2" />
<rect x="459" y="664" width="15" height="1" fill="#FFFFFF" />
<rect x="459" y="664" width="1" height="10" fill="#FFFFFF" />
<rect x="473" y="664" width="1" height="10" fill="#6a6a6a" />
<rect x="459" y="673" width="15" height="1" fill="#6a6a6a" />
<rect x="462" y="666" width="1" height="7" fill="#4a4a4a" />
<rect x="465" y="666" width="1" height="7" fill="#4a4a4a" />
<rect x="468" y="666" width="1" height="7" fill="#4a4a4a" />
<rect x="471" y="666" width="1" height="7" fill="#4a4a4a" />
</g>
<text x="479" y="688.2" font-size="9" fill="#303030" textLength="32.5" lengthAdjust="spacingAndGlyphs" stroke="#303030" stroke-width="0.25">Position</text>
<g shape-rendering="crispEdges">
<rect x="458" y="692" width="78" height="37" fill="#ABABAB" />
<rect x="457.5" y="691.5" width="79" height="38" fill="none" stroke="#000000" stroke-width="1"/>
<rect x="456.5" y="690.5" width="79" height="38" fill="none" stroke="#FFFFFF" stroke-width="1"/>
<rect x="459" y="697" width="75" height="1" fill="#D8D8D8" />
<rect x="459" y="698" width="75" height="24" fill="url(#hd)" />
<rect x="459" y="722" width="75" height="1" fill="#000000" />
<rect x="460" y="698" width="1" height="3" fill="#5a5a5a" />
<rect x="460" y="719" width="1" height="3" fill="#5a5a5a" />
<rect x="464" y="698" width="1" height="3" fill="#5a5a5a" />
<rect x="464" y="719" width="1" height="3" fill="#5a5a5a" />
<rect x="468" y="698" width="1" height="3" fill="#5a5a5a" />
<rect x="468" y="719" width="1" height="3" fill="#5a5a5a" />
<rect x="472" y="698" width="1" height="3" fill="#5a5a5a" />
<rect x="472" y="719" width="1" height="3" fill="#5a5a5a" />
<rect x="476" y="698" width="1" height="4" fill="#5a5a5a" />
<rect x="476" y="718" width="1" height="4" fill="#5a5a5a" />
<rect x="480" y="698" width="1" height="3" fill="#5a5a5a" />
<rect x="480" y="719" width="1" height="3" fill="#5a5a5a" />
<rect x="484" y="698" width="1" height="3" fill="#5a5a5a" />
<rect x="484" y="719" width="1" height="3" fill="#5a5a5a" />
<rect x="488" y="698" width="1" height="3" fill="#5a5a5a" />
<rect x="488" y="719" width="1" height="3" fill="#5a5a5a" />
<rect x="492" y="698" width="1" height="3" fill="#5a5a5a" />
<rect x="492" y="719" width="1" height="3" fill="#5a5a5a" />
<rect x="496" y="698" width="1" height="5" fill="#5a5a5a" />
<rect x="496" y="717" width="1" height="5" fill="#5a5a5a" />
<rect x="500" y="698" width="1" height="3" fill="#5a5a5a" />
<rect x="500" y="719" width="1" height="3" fill="#5a5a5a" />
<rect x="504" y="698" width="1" height="3" fill="#5a5a5a" />
<rect x="504" y="719" width="1" height="3" fill="#5a5a5a" />
<rect x="508" y="698" width="1" height="3" fill="#5a5a5a" />
<rect x="508" y="719" width="1" height="3" fill="#5a5a5a" />
<rect x="512" y="698" width="1" height="3" fill="#5a5a5a" />
<rect x="512" y="719" width="1" height="3" fill="#5a5a5a" />
<rect x="516" y="698" width="1" height="4" fill="#5a5a5a" />
<rect x="516" y="718" width="1" height="4" fill="#5a5a5a" />
<rect x="520" y="698" width="1" height="3" fill="#5a5a5a" />
<rect x="520" y="719" width="1" height="3" fill="#5a5a5a" />
<rect x="524" y="698" width="1" height="3" fill="#5a5a5a" />
<rect x="524" y="719" width="1" height="3" fill="#5a5a5a" />
<rect x="528" y="698" width="1" height="3" fill="#5a5a5a" />
<rect x="528" y="719" width="1" height="3" fill="#5a5a5a" />
<rect x="532" y="698" width="1" height="3" fill="#5a5a5a" />
<rect x="532" y="719" width="1" height="3" fill="#5a5a5a" />
</g>
<text x="475" y="712.8" font-size="9" fill="#000000" text-anchor="middle" stroke="#000000" stroke-width="0.3">210</text>
<text x="495.2" y="712.8" font-size="9" fill="#000000" text-anchor="middle" stroke="#000000" stroke-width="0.3">200</text>
<text x="515.5" y="712.8" font-size="9" fill="#000000" text-anchor="middle" stroke="#000000" stroke-width="0.3">190</text>
<path d="M491 692 h9.4 l-4.7 5 Z M491 728.5 h9.4 l-4.7 -5 Z" fill="#FF0000"/>
<path d="M452.5 819.5 L452.5 775.5 A44 44 0 0 1 518.93 737.65 L505.88 757.75 L477.5 785.5 L477.5 819.5 Z" fill="#FFFFFF" stroke="#3a3a3a" stroke-width="1"/>
<path d="M540.5 819.5 L540.5 775.5 A44 44 0 0 0 521.95 739.61 L508.90 759.71 L515.5 785.5 L515.5 819.5 Z" fill="#FFFFFF" stroke="#3a3a3a" stroke-width="1"/>
<path d="M476.25 795.96 L473.13 799.20 M471.29 789.60 L467.39 791.85 M468.26 782.12 L463.90 783.20 M467.42 774.09 L462.92 773.93 M468.82 766.14 L464.54 764.75 M472.36 758.88 L468.63 756.37 M477.76 752.88 L474.87 749.44 M484.60 748.61 L482.77 744.50 M492.36 746.38 L491.74 741.93 M500.44 746.38 L501.06 741.93 M508.20 748.61 L510.03 744.50 M515.04 752.88 L517.93 749.44 M520.44 758.88 L524.17 756.37 M523.98 766.14 L528.26 764.75 M525.38 774.09 L529.88 773.93 M524.54 782.12 L528.90 783.20 M521.51 789.60 L525.41 791.85 M516.55 795.96 L519.67 799.20 " stroke="#303030" stroke-width="0.9" fill="none"/>
<text x="468.3" y="807.4" font-size="6.9" fill="#282828" text-anchor="middle" stroke="#282828" stroke-width="0.2">200</text>
<text x="459.6" y="798.6" font-size="6.9" fill="#282828" text-anchor="middle" stroke="#282828" stroke-width="0.2">100</text>
<text x="457.6" y="788.4" font-size="6.9" fill="#282828" text-anchor="middle" stroke="#282828" stroke-width="0.2">50</text>
<text x="457.8" y="776.7" font-size="6.9" fill="#282828" text-anchor="middle" stroke="#282828" stroke-width="0.2">20</text>
<text x="458.8" y="766.5" font-size="6.9" fill="#282828" text-anchor="middle" stroke="#282828" stroke-width="0.2">10</text>
<text x="464.4" y="756.3" font-size="6.9" fill="#282828" text-anchor="middle" stroke="#282828" stroke-width="0.2">5</text>
<text x="472.0" y="748.8" font-size="6.9" fill="#282828" text-anchor="middle" stroke="#282828" stroke-width="0.2">2</text>
<text x="481.5" y="742.8" font-size="6.9" fill="#282828" text-anchor="middle" stroke="#282828" stroke-width="0.2">1</text>
<text x="492.0" y="738.6" font-size="6.9" fill="#282828" text-anchor="middle" stroke="#282828" stroke-width="0.2">0.5</text>
<text x="502.3" y="738.6" font-size="6.9" fill="#282828" text-anchor="middle" stroke="#282828" stroke-width="0.2">0.2</text>
<text x="510.9" y="743.3" font-size="6.9" fill="#282828" text-anchor="middle" stroke="#282828" stroke-width="0.2">0.1</text>
<text x="522.8" y="750.3" font-size="6.9" fill="#282828" text-anchor="middle" stroke="#282828" stroke-width="0.2">50</text>
<text x="529.7" y="756.5" font-size="6.9" fill="#282828" text-anchor="middle" stroke="#282828" stroke-width="0.2">20</text>
<text x="533.5" y="766.5" font-size="6.9" fill="#282828" text-anchor="middle" stroke="#282828" stroke-width="0.2">10</text>
<text x="535.7" y="777.6" font-size="6.9" fill="#282828" text-anchor="middle" stroke="#282828" stroke-width="0.2">5</text>
<text x="535.3" y="787.6" font-size="6.9" fill="#282828" text-anchor="middle" stroke="#282828" stroke-width="0.2">2</text>
<text x="532.2" y="799.4" font-size="6.9" fill="#282828" text-anchor="middle" stroke="#282828" stroke-width="0.2">1</text>
<text x="524.8" y="807.6" font-size="6.9" fill="#282828" text-anchor="middle" stroke="#282828" stroke-width="0.2">0.5</text>
<text x="464.4" y="815.7" font-size="9.5" fill="#282828" text-anchor="middle" stroke="#282828" stroke-width="0.2">mS</text>
<text x="528.5" y="815.7" font-size="9.5" fill="#282828" text-anchor="middle" stroke="#282828" stroke-width="0.2">µS</text>
<circle cx="498.0" cy="776.6" r="31" fill="url(#ks)"/>
<circle cx="496.4" cy="775.0" r="29.4" fill="url(#kg)" stroke="#565656" stroke-width="0.9"/>
<circle cx="496.7" cy="775.9" r="16" fill="url(#rg)"/>
<circle cx="496.4" cy="775.5" r="14.4" fill="url(#cg)"/>
<path d="M500.16 748.26 L504.12 757.40 L493.83 755.96 Z" fill="#F07E1E"/>
<path d="M506.26 785.21 L499.79 783.12 L504.40 778.68 Z" fill="#F07E1E"/>
<g shape-rendering="crispEdges">
<rect x="479" y="806" width="36" height="13" fill="#FFFFFF" />
<rect x="479" y="806" width="36" height="1" fill="#000000" />
<rect x="479" y="806" width="1" height="13" fill="#000000" />
</g>
<text x="481" y="816.3" font-size="9.5" fill="#000080">0.2m</text>
</svg></body></html>
